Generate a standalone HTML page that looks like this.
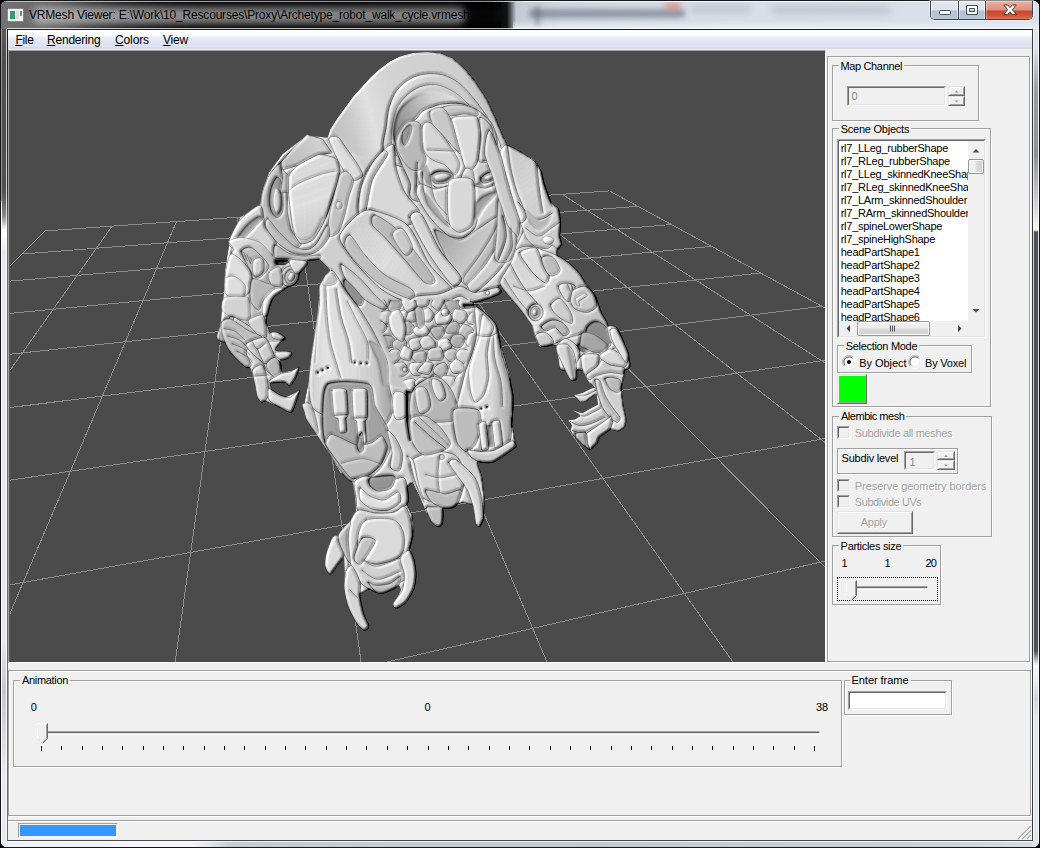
<!DOCTYPE html>
<html><head><meta charset='utf-8'><title>VRMesh Viewer</title>
<style>
html,body{margin:0;padding:0;background:#000;}
body{width:1040px;height:848px;overflow:hidden;font-family:"Liberation Sans",sans-serif;}
#win{position:relative;width:1040px;height:848px;overflow:hidden;}
#win div,#win span.t,#win svg{position:absolute;}
.t{white-space:pre;display:block;}
.dis{color:#a0a0a0;text-shadow:1px 1px 0 #fff;}
u{text-decoration:underline;text-underline-offset:1px;}

</style></head>
<body>
<div id='win'>
<div style='left:0;top:0;width:1040px;height:848px;border-radius:7px;background:#14161a;'></div>
<div id='glass' style='left:1px;top:1px;width:1038px;height:846px;border-radius:6px;background:#dfe5f0;box-shadow:inset 0 0 0 1px #f4f7fb;overflow:hidden;'><div style='left:0;top:839px;width:1038px;height:7px;background:linear-gradient(90deg,#eef2f8 0px,#f2f5fa 190px,#e2e7ee 208px,#c6cdd7 228px,#c3cad4 600px,#c9d0d9 900px,#d6dce5 1038px);'></div><div style='left:1031px;top:0;width:7px;height:846px;background:linear-gradient(180deg,#dfe5ee 0px,#dfe5ee 46px,#9a9da2 88px,#8e9196 155px,#ececec 222px,#f6f6f6 229px,#4e5358 231px,#4e5358 650px,#f4f6fa 664px,#e9edf4 680px,#cfd3da 698px,#e2e7f0 716px,#dfe5f0 846px);'></div><div style='left:1037px;top:6px;width:1px;height:834px;background:rgba(255,255,255,.82);'></div><div style='left:0;top:0;width:7px;height:846px;background:linear-gradient(180deg,#6e6e6e 0px,#585858 30px,#4e4e4e 60px,#505050 190px,#8a8a8a 215px,#ffffff 229px,#ffffff 233px,#e4e8f4 250px,#e4e8f4 640px,#c3c7cf 690px,#e4e8f4 770px,#e6eaf4 846px);'></div><div style='left:0;top:200px;width:1px;height:646px;background:#fff;'></div><div style='left:0;top:6px;width:1px;height:194px;background:rgba(255,255,255,.4);'></div><div style='left:5px;top:235px;width:1px;height:611px;background:#f4f8fc;'></div><div style='left:0;top:0;width:1038px;height:28px;background:linear-gradient(90deg,#727272 0px,#6a6a6a 40px,#3a3a3a 110px,#111 200px,#050505 492px,#101214 506px,#5c6066 510px,#c3cad4 515px,#cfd7e1 560px,#d6dde6 700px,#d9e0e8 1038px);'></div><div style='left:60px;top:0;width:440px;height:28px;background:linear-gradient(180deg,rgba(0,0,0,.9) 0,rgba(0,0,0,0) 9px,rgba(0,0,0,0) 19px,rgba(0,0,0,.9) 28px);-webkit-mask-image:linear-gradient(90deg,transparent 0,#000 120px);'></div><div style='left:36px;top:11px;width:424px;height:7px;border-radius:4px;background:rgba(255,255,255,.48);box-shadow:0 0 7px 5px rgba(255,255,255,.46);'></div><div style='left:512px;top:19px;width:526px;height:9px;background:linear-gradient(180deg,rgba(236,242,249,0),rgba(236,242,249,.85));'></div><div style='left:528px;top:8px;width:156px;height:9px;border-radius:4px;background:rgba(60,70,85,.42);filter:blur(2.5px);'></div><div style='left:534px;top:5px;width:5px;height:20px;border-radius:2px;background:rgba(60,70,85,.3);filter:blur(2px);'></div><div style='left:690px;top:4px;width:60px;height:8px;border-radius:4px;background:rgba(90,100,115,.16);filter:blur(3px);'></div><div style='left:770px;top:5px;width:120px;height:8px;border-radius:4px;background:rgba(90,100,115,.18);filter:blur(3px);'></div><div style='left:664px;top:1px;width:16px;height:8px;border-radius:4px;background:rgba(235,110,90,.6);filter:blur(3px);'></div><div style='left:5px;top:0;width:1028px;height:1px;background:linear-gradient(90deg,#c4c4c4 0,#a0a0a0 200px,#8a8a8a 480px,#f4f7fb 520px,#f8fafc 100%);'></div></div>
<div style='left:8px;top:9px;width:15px;height:12px;background:#f4f4f4;box-shadow:0 0 1px #fff;'><div style='left:2px;top:2px;width:5px;height:8px;background:linear-gradient(180deg,#4a7fb0,#2f9a78 50%,#35a04a);'></div><div style='left:8px;top:2px;width:3px;height:8px;background:#dcdcdc;'></div><div style='left:12px;top:2px;width:2px;height:5px;background:linear-gradient(180deg,#4a80c0,#5ab060);'></div></div>
<span class='t ' style='left:29px;top:9.14px;font-size:12px;line-height:13.79px;color:#000;letter-spacing:-0.183px;'>VRMesh Viewer: E:\Work\10_Rescourses\Proxy\Archetype_robot_walk_cycle.vrmesh</span>
<div style='left:930px;top:1px;width:103px;height:19px;border:1px solid #3b4452;border-top:none;border-radius:0 0 5px 5px;box-sizing:border-box;overflow:hidden;background:#c9d3df;box-shadow:0 0 1px 1px rgba(255,255,255,.55);'><div style='left:0;top:0;width:27px;height:19px;background:linear-gradient(180deg,#e3e9f0 0,#dbe2eb 9px,#b3c0d0 10px,#b9c6d5 19px);box-shadow:inset 0 0 0 1px rgba(255,255,255,.5);'></div><div style='left:27px;top:0;width:1px;height:19px;background:#3b4452;'></div><div style='left:28px;top:0;width:26px;height:19px;background:linear-gradient(180deg,#e3e9f0 0,#dbe2eb 9px,#b3c0d0 10px,#b9c6d5 19px);box-shadow:inset 0 0 0 1px rgba(255,255,255,.5);'></div><div style='left:54px;top:0;width:1px;height:19px;background:#3b4452;'></div><div style='left:55px;top:0;width:47px;height:19px;background:linear-gradient(180deg,#eeb0a2 0,#e08f7e 9px,#c9452c 10px,#d2573a 15px,#dc8066 19px);box-shadow:inset 0 0 0 1px rgba(255,255,255,.35);'></div></div>
<svg style='left:930px;top:0' width='103' height='20' viewBox='0 0 103 20'><rect x='9.5' y='10.5' width='11' height='4' rx='1' fill='#fff' stroke='#454f5e' stroke-width='1'/><path d='M36.5 5.5h11v9h-11z M39.5 8.5h5v3h-5z' fill='#fff' fill-rule='evenodd' stroke='#454f5e' stroke-width='1' stroke-linejoin='round'/><path d='M73.8 5 L77.8 5 L80 7.6 L82.2 5 L86.2 5 L82.3 9.7 L86.5 14.6 L82.3 14.6 L80 11.8 L77.7 14.6 L73.5 14.6 L77.7 9.7 Z' fill='#fff' stroke='#4e3434' stroke-width='1' stroke-linejoin='round'/></svg>
<div style='left:6px;top:28px;width:1028px;height:814px;box-sizing:border-box;border:1px solid rgba(255,255,255,.75);border-radius:1px;'></div>
<div style='left:7px;top:29px;width:1026px;height:812px;box-sizing:border-box;border:1px solid #45484c;border-top-color:#1c1c1c;border-left-color:#66696e;border-right-color:#36383b;'></div>
<div style='left:7px;top:29px;width:1px;height:200px;background:linear-gradient(180deg,#151515,#303030 160px,#6e7074);'></div>
<div id='client' style='left:8px;top:30px;width:1024px;height:810px;background:#f0f0f0;'></div>
<div style='left:8px;top:30px;width:1024px;height:19px;background:linear-gradient(180deg,#ffffff 0,#fbfcfe 5px,#e9ecf6 8px,#dfe4f2 13px,#dde2f0 17px,#cdd2e0 18px,#e6e8ee 19px);'></div>
<span class='t ' style='left:15.5px;top:33.94px;font-size:12px;line-height:13.79px;color:#000;letter-spacing:-0.336px;'><u>F</u>ile</span>
<span class='t ' style='left:47px;top:33.94px;font-size:12px;line-height:13.79px;color:#000;letter-spacing:-0.208px;'><u>R</u>endering</span>
<span class='t ' style='left:115px;top:33.94px;font-size:12px;line-height:13.79px;color:#000;letter-spacing:-0.115px;'><u>C</u>olors</span>
<span class='t ' style='left:163px;top:33.94px;font-size:12px;line-height:13.79px;color:#000;letter-spacing:-0.199px;'><u>V</u>iew</span>
<div style='left:8px;top:50px;width:818px;height:613px;box-sizing:border-box;border:1px solid;border-color:#a0a0a0 #fff #fff #a0a0a0;background:#4b4b4b;'></div>
<svg style='left:9px;top:51px' width='816' height='611' viewBox='9 51 816 611'>
<rect x='9' y='51' width='816' height='611' fill='#4b4b4b'/>
<g stroke='#8c8c8c' stroke-width='1' fill='none' shape-rendering='crispEdges'>
<line x1='45.0' y1='230.9' x2='609.5' y2='190.9'/>
<line x1='22.0' y1='254.0' x2='637.9' y2='206.3'/>
<line x1='-6.2' y1='282.5' x2='671.4' y2='224.5'/>
<line x1='-41.7' y1='318.3' x2='711.6' y2='246.4'/>
<line x1='-87.7' y1='364.8' x2='760.7' y2='273.0'/>
<line x1='-149.9' y1='427.5' x2='822.0' y2='306.3'/>
<line x1='-238.3' y1='516.7' x2='900.8' y2='349.1'/>
<line x1='-374.2' y1='653.8' x2='1005.7' y2='406.1'/>
<line x1='-609.6' y1='891.4' x2='1152.3' y2='485.7'/>
<line x1='-1117.5' y1='1403.9' x2='1371.7' y2='604.8'/>
<line x1='-3020.1' y1='3323.6' x2='1735.9' y2='802.6'/>
<line x1='45.0' y1='230.9' x2='-3020.1' y2='3323.6'/>
<line x1='112.1' y1='226.1' x2='-1516.7' y2='2526.7'/>
<line x1='176.5' y1='221.6' x2='-595.5' y2='2038.4'/>
<line x1='238.2' y1='217.2' x2='26.8' y2='1708.5'/>
<line x1='297.6' y1='213.0' x2='475.4' y2='1470.7'/>
<line x1='354.6' y1='209.0' x2='814.2' y2='1291.2'/>
<line x1='409.5' y1='205.1' x2='1079.0' y2='1150.8'/>
<line x1='462.3' y1='201.3' x2='1291.7' y2='1038.0'/>
<line x1='513.1' y1='197.7' x2='1466.3' y2='945.5'/>
<line x1='562.2' y1='194.3' x2='1612.2' y2='868.2'/>
<line x1='609.5' y1='190.9' x2='1735.9' y2='802.6'/>
</g>
<defs><filter id='emb' x='200' y='45' width='460' height='600' filterUnits='userSpaceOnUse' color-interpolation-filters='sRGB'><feColorMatrix in='SourceGraphic' type='luminanceToAlpha' result='lum'/><feGaussianBlur in='lum' stdDeviation='0.9' result='b'/><feDiffuseLighting in='b' surfaceScale='5' diffuseConstant='1' lighting-color='#ffffff' result='lit'><feDistantLight azimuth='215' elevation='50'/></feDiffuseLighting><feComposite in='lit' in2='SourceGraphic' operator='arithmetic' k1='0' k2='0.75' k3='1' k4='-0.55' result='sh'/><feComposite in='sh' in2='SourceAlpha' operator='in'/></filter></defs><g id='robot' filter='url(#emb)'>
<defs><linearGradient id='gA' x1='0' y1='0' x2='1' y2='0'><stop offset='0' stop-color='#a9a9a9'/><stop offset='.25' stop-color='#cfcfcf'/><stop offset='.6' stop-color='#d8d8d8'/><stop offset='1' stop-color='#b4b4b4'/></linearGradient></defs>
<path d='M330 130 L337 119 L345 108 L353 97 L362 87 L371 77 L380 69 L390 61.5 L400 56.5 L413 53 L427 52 L441 53.5 L453 58.5 L465 69 L477 84 L488 101 L497 121 L504 138 L508.5 146 L522 152.5 L535 160 L540 170 L545 185 L551 202 L557.5 207.5 L561 220 L560 235 L562.5 245 L557.5 250 L557.5 260 L575 272.5 L585 282.5 L592.5 292.5 L600 312.5 L605 326 L617.5 330 L628.75 353.75 L626 365 L623.75 380 L621.7 388.5 L623.9 406.5 L627 420.3 L625 427.8 L618.5 432 L613.2 430 L610 430 L599.4 437.3 L597.3 443.7 L590 450.6 L582.5 444.8 L575 437.3 L570.3 431 L572 425.5 L568.1 420.3 L575 419.3 L580.3 416 L572.4 410.3 L582.5 413 L592 407.5 L597.9 404.4 L596.3 393.8 L585.6 402.3 L580.3 402.3 L574 394.9 L582.5 392.7 L591 388.5 L595.2 387.4 L588.75 382.5 L582.5 371.25 L580 355 L577.5 356 L576.9 378.75 L571.25 380.6 L566.25 372.5 L561.25 361.25 L556.9 352.5 L556.9 345 L540 347.5 L534 335 L532 326 L520 309 L504.6 290.8 L500 285 L489 297 L472.5 300 L475 307.5 L497.5 327.5 L502.5 350 L510 375 L514 400 L512.5 425 L516 445 L492.5 461 L477.5 462.5 L482.5 477.5 L485 500 L484 520 L480 527.5 L476 522.5 L472.5 505 L462.5 502.5 L450 507.5 L440 510 L442.5 525 L435 525 L426 512.5 L420 497.5 L412.5 482.5 L407.5 487.5 L407.5 505 L412.5 515 L414 535 L410 550 L415 565 L415 582.5 L407.5 600 L397.5 609 L394 604 L401 590 L397.5 582.5 L382.5 592.5 L372.5 587.5 L359 595 L362.5 612.5 L369 626 L364 630 L356 620 L349 605 L345 587.5 L344 557.5 L337.5 565 L331 575 L327.5 570 L326 557.5 L332.5 537.5 L340 537.5 L347.5 525 L356 512.5 L355 497.5 L352.5 482.5 L340 472.5 L330 455 L320 440 L310 425 L304 410 L305 400 L309 380 L312.5 350 L317.5 312.5 L320 285 L330 270 L320 260 L310 257.5 L307.5 262.5 L297.5 277.5 L287.5 287.5 L275 287.5 L272.5 300 L266 320 L270 332.5 L285 337.5 L275 350 L291 354 L280 360 L282.5 372.5 L299 369 L287.5 382.5 L270 382.5 L272.5 392.5 L285 397.5 L299 391 L292.5 412.5 L285 410 L262.5 400 L257.5 390 L250 367.5 L237.5 355 L225 340 L221 322.5 L224 295 L225 270 L229 245 L240 217.5 L260 205 L262.5 190 L269 172.5 L282.5 154 L307.5 135 L327.5 137.5 Z' fill='#c9c9c9' />
<defs><linearGradient id='hoodO' gradientUnits='userSpaceOnUse' x1='330' y1='150' x2='510' y2='100'><stop offset='0' stop-color='#b6b6b6'/><stop offset='0.15' stop-color='#c2c2c2'/><stop offset='0.27' stop-color='#d9d9d9'/><stop offset='0.4' stop-color='#cecece'/><stop offset='0.8' stop-color='#c8c8c8'/><stop offset='1' stop-color='#a6a6a6'/></linearGradient><linearGradient id='hoodCav' gradientUnits='userSpaceOnUse' x1='395' y1='135' x2='470' y2='95'><stop offset='0' stop-color='#7c7c7c'/><stop offset='0.25' stop-color='#9a9a9a'/><stop offset='0.6' stop-color='#c8c8c8'/><stop offset='1' stop-color='#dedede'/></linearGradient><linearGradient id='ring1' gradientUnits='userSpaceOnUse' x1='385' y1='140' x2='480' y2='100'><stop offset='0' stop-color='#bcbcbc'/><stop offset='0.4' stop-color='#d4d4d4'/><stop offset='1' stop-color='#c2c2c2'/></linearGradient></defs>
<path d='M330 130 L337 119 L345 108 L353 97 L362 87 L371 77 L380 69 L390 61.5 L400 56.5 L413 53 L427 52 L441 53.5 L453 58.5 L465 69 L477 84 L488 101 L497 121 L504 138 L508.5 146 L512 160 L500 175 L383 165 L345 150 Z' fill='url(#hoodO)' />
<path d='M383.5 150 C381.7 143.6 385.4 134.0 386.3 126.9 C387.2 119.9 387.4 113.8 389.2 107.7 C391.0 101.6 393.4 95.2 396.9 90.4 C400.4 85.6 405.6 81.5 410.4 78.8 C415.2 76.1 420.4 74.6 425.8 74 C431.2 73.4 437.7 73.5 443.1 75 C448.6 76.5 453.7 79.2 458.5 82.7 C463.3 86.2 467.7 91.4 471.9 96.2 C476.1 101.0 480.0 106.4 483.5 111.5 C487.0 116.6 490.2 121.1 493.1 126.9 C496.0 132.7 498.9 139.8 500.8 146.2 C502.7 152.6 512.3 160.9 504.6 165.4 C496.9 169.9 472.6 173.1 454.6 173.1 C436.7 173.1 408.8 169.2 396.9 165.4 C385.0 161.6 385.3 156.4 383.5 150 Z' fill='url(#ring1)' stroke='#6a6a6a' stroke-width='1' stroke-linejoin='round' stroke-linecap='round' />
<path d='M391.5 142.3 C390.4 135.6 392.4 124.0 394 117.3 C395.6 110.6 397.1 106.7 400.8 101.9 C404.5 97.1 410.4 91.4 416.2 88.5 C422.0 85.6 429.0 84.0 435.4 84.6 C441.8 85.2 448.8 88.8 454.6 92.3 C460.4 95.8 465.5 101.3 470 105.8 C474.5 110.3 478.0 114.1 481.5 119.2 C485.0 124.3 488.6 130.1 491.2 136.5 C493.8 142.9 503.0 152.9 496.9 157.7 C490.8 162.5 470.6 165.4 454.6 165.4 C438.6 165.4 411.3 161.5 400.8 157.7 C390.3 153.8 392.6 149.0 391.5 142.3 Z' fill='#c4c4c4' stroke='#7a7a7a' stroke-width='0.8' stroke-linejoin='round' stroke-linecap='round' />
<path d='M394 140.4 C392.1 135.3 393.9 125.0 395.4 119.2 C396.8 113.4 398.9 109.8 402.7 105.8 C406.5 101.8 412.7 97.6 418.1 95.2 C423.6 92.8 429.6 91.1 435.4 91.3 C441.2 91.5 447.2 93.5 452.7 96.2 C458.1 98.9 463.6 103.5 468.1 107.7 C472.6 111.9 476.4 116.4 479.6 121.2 C482.8 126.0 491.5 130.4 487.3 136.5 C483.1 142.6 468.1 155.4 454.6 157.7 C441.1 159.9 416.6 152.9 406.5 150 C396.4 147.1 395.9 145.5 394 140.4 Z' fill='url(#hoodCav)' />
<defs><linearGradient id='headG' gradientUnits='userSpaceOnUse' x1='398' y1='140' x2='498' y2='130'><stop offset='0' stop-color='#b0b0b0'/><stop offset='0.3' stop-color='#cecece'/><stop offset='0.6' stop-color='#d8d8d8'/><stop offset='1' stop-color='#b8b8b8'/></linearGradient></defs>
<path d='M415 120 C418.1 117.7 419.6 113.4 422.5 111.2 C425.4 109.0 429.2 108.1 432.5 106.9 C435.8 105.7 437.9 104.6 442.5 104 C447.1 103.4 454.6 102.7 460 103.5 C465.4 104.3 470.8 106.7 475 108.8 C479.2 110.9 482.1 113.5 485 116.2 C487.9 118.9 490.5 121.2 492.5 125 C494.5 128.8 496.0 133.8 496.9 138.8 C497.8 143.8 498.0 149.8 498.1 155 C498.2 160.2 498.2 165.4 497.5 170 C496.8 174.6 495.5 178.3 493.8 182.5 C492.1 186.7 489.8 191.9 487.5 195 C485.2 198.1 491.9 200.0 480 201 C468.1 202.0 427.9 204.1 416.2 201 C404.5 197.9 412.7 189.3 410 182.5 C407.3 175.7 402.4 166.7 400 160 C397.6 153.3 395.0 148.3 395.6 142.5 C396.2 136.7 400.6 128.8 403.8 125 C407.0 121.2 411.9 122.3 415 120 Z' fill='url(#headG)' stroke='#5a5a5a' stroke-width='1' stroke-linejoin='round' stroke-linecap='round' />
<path d='M405 124.4 C407.9 120.9 411.1 120.9 413.8 121.2 C416.5 121.5 419.8 121.8 421.2 126.2 C422.6 130.6 421.7 141.9 422.5 147.5 C423.3 153.1 426.4 156.4 426.2 160 C426.0 163.6 423.5 167.1 421.2 168.8 C418.9 170.5 415.6 171.5 412.5 170 C409.4 168.5 405.2 164.6 402.5 160 C399.8 155.4 395.8 148.4 396.2 142.5 C396.6 136.6 402.1 128.0 405 124.4 Z' fill='#b2b2b2' stroke='#6a6a6a' stroke-width='0.8' stroke-linejoin='round' stroke-linecap='round' />
<path d='M402.5 132.5 C403.6 129.6 407.2 125.8 408.8 125 C410.4 124.2 411.7 125.6 411.9 127.5 C412.1 129.4 411.1 133.3 410 136.2 C408.9 139.1 406.9 143.9 405.6 145 C404.4 146.1 403.0 144.6 402.5 142.5 C402.0 140.4 401.4 135.4 402.5 132.5 Z' fill='#8e8e8e' stroke='#555' stroke-width='0.6' stroke-linejoin='round' stroke-linecap='round' />
<path d='M451.9 118.1 C453.1 116.2 462.1 116.3 465 116.2 C467.9 116.1 475.1 115.0 476.9 116.9 C478.7 118.8 480.5 127.5 480.6 132.5 C480.7 137.5 479.2 155.6 478.1 160 C477.0 164.4 472.7 169.7 471.2 170.6 C469.7 171.5 466.3 169.8 465 167.5 C463.7 165.2 461.2 155.3 460 151.2 C458.8 147.1 455.9 136.4 455 132.5 C454.1 128.6 450.7 120.0 451.9 118.1 Z' fill='#d5d5d5' stroke='#707070' stroke-width='0.9' stroke-linejoin='round' stroke-linecap='round' />
<path d='M442.5 107.5 C444.0 105.7 454.6 104.7 460 105 C465.4 105.3 472.1 107.6 475 109.4 C477.9 111.2 479.2 114.9 477.5 115.6 C475.8 116.3 469.4 113.8 465 113.8 C460.6 113.8 454.9 116.6 451.2 115.6 C447.4 114.5 441.0 109.3 442.5 107.5 Z' fill='#bdbdbd' stroke='#6a6a6a' stroke-width='0.8' stroke-linejoin='round' stroke-linecap='round' />
<path d='M422.5 126.2 C423.3 122.5 427.3 121.3 430 122.5 C432.7 123.7 439.2 130.8 442.5 135 C445.8 139.2 452.7 149.8 455 153.8 C457.3 157.8 460.0 162.2 460 165 C460.0 167.8 457.0 175.0 455 175 C453.0 175.0 448.0 167.0 445 165 C442.0 163.0 435.3 162.0 432.5 160 C429.7 158.0 425.1 154.5 423.8 150 C422.5 145.5 421.7 129.9 422.5 126.2 Z' fill='#cfcfcf' stroke='#686868' stroke-width='0.8' stroke-linejoin='round' stroke-linecap='round' />
<path d='M430 111.2 C431.3 109.0 439.7 106.3 442.5 107.5 C445.3 108.7 449.2 115.3 451.2 120 C453.2 124.7 456.3 138.0 457.5 142.5 C458.7 147.0 461.8 154.6 460 153.8 C458.2 153.0 447.5 140.2 443.8 136.2 C440.1 132.2 434.3 127.1 432.5 123.8 C430.7 120.5 428.7 113.4 430 111.2 Z' fill='#c2c2c2' stroke='#6c6c6c' stroke-width='0.8' stroke-linejoin='round' stroke-linecap='round' />
<path d='M480 117.5 C481.3 115.8 489.2 122.5 491.2 126.2 C493.2 129.9 494.5 140.5 495 145 C495.5 149.5 496.3 157.7 495 160 C493.7 162.3 487.2 162.5 485 162.5 C482.8 162.5 479.3 163.2 478.8 160 C478.3 156.8 481.0 144.5 481.2 138.8 C481.4 133.1 478.7 119.2 480 117.5 Z' fill='#c0c0c0' stroke='#6a6a6a' stroke-width='0.8' stroke-linejoin='round' stroke-linecap='round' />
<path d='M431.2 175 C432.2 173.3 435.7 171.6 438.8 171.2 C441.9 170.8 447.5 171.4 450 172.5 C452.5 173.6 454.2 175.8 453.8 177.5 C453.4 179.2 450.2 181.4 447.5 182.5 C444.8 183.6 440.0 184.0 437.5 183.8 C435.0 183.6 433.6 182.7 432.5 181.2 C431.4 179.7 430.1 176.7 431.2 175 Z' fill='#909090' stroke='#505050' stroke-width='0.8' stroke-linejoin='round' stroke-linecap='round' />
<path d='M435 176.2 C436.1 175.1 441.3 173.8 443.8 173.8 C446.3 173.8 450.0 175.2 450 176.2 C450.0 177.2 445.9 179.3 443.8 180 C441.7 180.7 439.0 181.2 437.5 180.6 C436.0 180.0 433.9 177.3 435 176.2 Z' fill='#cacaca' />
<path d='M481.2 177.5 C482.4 175.8 486.3 173.2 488.8 172.5 C491.3 171.8 495.2 172.0 496.2 173.1 C497.2 174.2 496.4 177.2 495 178.8 C493.6 180.4 489.7 181.9 487.5 182.5 C485.3 183.1 482.9 183.3 481.9 182.5 C480.8 181.7 480.0 179.2 481.2 177.5 Z' fill='#8c8c8c' stroke='#505050' stroke-width='0.8' stroke-linejoin='round' stroke-linecap='round' />
<path d='M485 177.5 C485.4 176.6 489.7 174.6 491.2 174.4 C492.7 174.2 494.2 175.3 493.8 176.2 C493.4 177.1 490.3 179.8 488.8 180 C487.3 180.2 484.6 178.4 485 177.5 Z' fill='#c4c4c4' />
<path d='M465 168.8 C466.7 167.2 471.2 168.8 472.5 170.6 C473.8 172.4 474.5 178.4 475 182.5 C475.5 186.6 478.0 198.5 476.2 201 C474.4 203.5 463.4 203.5 461.2 201 C459.0 198.5 459.5 186.8 460 182.5 C460.5 178.2 463.3 170.4 465 168.8 Z' fill='#cdcdcd' stroke='#707070' stroke-width='0.8' stroke-linejoin='round' stroke-linecap='round' />
<path d='M422.5 170 C424.2 172.5 428.8 181.7 432.5 185 C436.2 188.3 441.2 190.4 445 190 C448.8 189.6 452.5 183.3 455 182.5 C457.5 181.7 459.2 184.6 460 185' fill='none' stroke='#5e5e5e' stroke-width='1' stroke-linejoin='round' stroke-linecap='round' />
<path d='M416.2 172.5 C417.2 175.4 419.8 185.2 422.5 190 C425.2 194.8 430.8 199.2 432.5 201' fill='none' stroke='#666' stroke-width='1' stroke-linejoin='round' stroke-linecap='round' />
<path d='M477.5 185 C478.8 185.8 482.1 190.0 485 190 C487.9 190.0 493.3 185.8 495 185' fill='none' stroke='#5e5e5e' stroke-width='1' stroke-linejoin='round' stroke-linecap='round' />
<path d='M427.5 150 C429.6 150.1 434.6 150.4 440 150.6 C445.4 150.8 456.7 151.1 460 151.2' fill='none' stroke='#777' stroke-width='0.8' stroke-linejoin='round' stroke-linecap='round' />
<path d='M482.5 161.2 C484.2 161.0 490.0 159.4 492.5 160 C495.0 160.6 496.7 164.2 497.5 165' fill='none' stroke='#666' stroke-width='0.8' stroke-linejoin='round' stroke-linecap='round' />
<path d='M421.2 168.8 C421.2 165.9 424.5 164.0 426.2 165 C427.9 166.0 430.1 171.7 431.2 175 C432.2 178.3 433.3 183.8 432.5 185 C431.7 186.2 428.1 185.2 426.2 182.5 C424.3 179.8 421.2 171.7 421.2 168.8 Z' fill='#a4a4a4' />
<path d='M475 185 C475.8 182.9 479.5 181.7 481.2 182.5 C482.9 183.3 485.2 187.5 485 190 C484.8 192.5 481.5 196.7 480 197.5 C478.5 198.3 477.0 197.1 476.2 195 C475.4 192.9 474.2 187.1 475 185 Z' fill='#a0a0a0' />
<defs><linearGradient id='chestL' gradientUnits='userSpaceOnUse' x1='330' y1='200' x2='470' y2='290'><stop offset='0' stop-color='#bebebe'/><stop offset='0.5' stop-color='#d6d6d6'/><stop offset='1' stop-color='#c4c4c4'/></linearGradient><linearGradient id='neckG' gradientUnits='userSpaceOnUse' x1='440' y1='230' x2='520' y2='280'><stop offset='0' stop-color='#9a9a9a'/><stop offset='0.5' stop-color='#c2c2c2'/><stop offset='1' stop-color='#d4d4d4'/></linearGradient></defs>
<path d='M382.5 151.2 C386.2 147.5 392.0 142.8 393.8 145 C395.6 147.2 394.7 161.2 396.2 167.5 C397.7 173.8 401.8 186.5 405 192.5 C408.2 198.5 419.7 208.2 420 212.5 C420.3 216.8 413.8 225.3 407.5 225 C401.2 224.7 379.0 211.7 372.5 210 C366.0 208.3 360.5 214.8 358.8 212.5 C357.1 210.2 359.0 197.8 360 192.5 C361.0 187.2 363.2 178.0 366.2 172.5 C369.2 167.0 378.8 154.9 382.5 151.2 Z' fill='#d2d2d2' stroke='#666' stroke-width='0.9' stroke-linejoin='round' stroke-linecap='round' />
<path d='M382.5 151.2 C384.7 149.9 388.8 151.2 387.5 155 C386.2 158.8 375.4 172.3 372.5 180 C369.6 187.7 367.3 208.2 365.5 212.5 C363.7 216.8 359.4 215.8 358.8 212.5 C358.2 209.2 359.5 193.8 361.2 187.5 C362.9 181.2 368.4 169.8 371.2 165 C374.0 160.2 380.3 152.5 382.5 151.2 Z' fill='#c6c6c6' stroke='#5c5c5c' stroke-width='0.9' stroke-linejoin='round' stroke-linecap='round' />
<path d='M435 230 C437.0 228.0 454.0 240.3 460 240 C466.0 239.7 473.7 231.2 480 227.5 C486.3 223.8 502.5 211.2 507.5 212.5 C512.5 213.8 518.5 230.5 517.5 237.5 C516.5 244.5 506.0 258.7 500 265 C494.0 271.3 477.8 283.0 472.5 285 C467.2 287.0 463.7 284.0 460 280 C456.3 276.0 448.3 261.7 445 255 C441.7 248.3 433.0 232.0 435 230 Z' fill='url(#neckG)' stroke='#707070' stroke-width='0.8' stroke-linejoin='round' stroke-linecap='round' />
<path d='M358.8 213.8 C362.6 211.4 366.0 209.0 372.5 210.5 C379.0 212.0 399.8 217.7 407.5 225 C415.2 232.3 424.0 256.3 430 265 C436.0 273.7 451.2 285.8 452.5 290 C453.8 294.2 445.7 294.5 440 296.2 C434.3 297.9 417.7 303.3 410 302.5 C402.3 301.7 389.5 295.0 382.5 290 C375.5 285.0 363.2 271.7 357.5 265 C351.8 258.3 341.8 244.8 340 240 C338.2 235.2 341.3 232.3 343.8 228.8 C346.3 225.3 355.0 216.2 358.8 213.8 Z' fill='url(#chestL)' stroke='#5c5c5c' stroke-width='0.9' stroke-linejoin='round' stroke-linecap='round' />
<path d='M375 215 C378.8 215.8 391.1 224.0 397.5 230 C403.9 236.0 411.9 247.5 417.5 255 C423.1 262.5 433.9 275.9 435 280 C436.1 284.1 429.5 285.5 425 282.5 C420.5 279.5 411.0 266.8 405 260 C399.0 253.2 389.9 242.8 385 237.5 C380.1 232.2 374.0 228.4 372.5 225 C371.0 221.6 371.2 214.2 375 215 Z' fill='#b4b4b4' stroke='#6a6a6a' stroke-width='0.8' stroke-linejoin='round' stroke-linecap='round' />
<path d='M350 235 C353.0 236.3 359.8 249.0 365 255 C370.2 261.0 377.9 269.8 385 275 C392.1 280.2 408.8 286.4 412.5 290 C416.2 293.6 414.5 299.4 410 298.8 C405.5 298.2 390.0 291.1 382.5 286.2 C375.0 281.3 365.6 272.2 360 266.2 C354.4 260.2 346.5 250.9 345 246.2 C343.5 241.5 347.0 233.7 350 235 Z' fill='#bababa' stroke='#6a6a6a' stroke-width='0.8' stroke-linejoin='round' stroke-linecap='round' />
<path d='M410 217.5 C409.5 213.0 417.2 209.5 421.2 213.8 C425.2 218.1 434.7 241.5 440 250 C445.3 258.5 459.4 272.7 461.2 277.5 C463.0 282.3 456.6 287.2 453.8 286.2 C451.0 285.2 443.8 275.2 440 270 C436.2 264.8 429.0 254.5 425 247.5 C421.0 240.5 410.5 222.0 410 217.5 Z' fill='#d0d0d0' stroke='#5a5a5a' stroke-width='0.9' stroke-linejoin='round' stroke-linecap='round' />
<path d='M392.5 235 C392.1 230.6 399.2 226.7 402.5 228.8 C405.8 230.9 412.1 243.1 412.5 247.5 C412.9 251.9 408.3 257.1 405 255 C401.7 252.9 392.9 239.4 392.5 235 Z' fill='#c4c4c4' stroke='#666' stroke-width='0.8' stroke-linejoin='round' stroke-linecap='round' />
<path d='M520 210 C521.8 212.7 525.7 220.0 525 225 C524.3 230.0 518.7 241.2 515 247.5 C511.3 253.8 502.8 266.5 497.5 272.5 C492.2 278.5 479.0 291.0 475 292.5 C471.0 294.0 466.2 287.5 467.5 283.8 C468.8 280.1 480.3 271.5 485 265 C489.7 258.5 499.0 243.0 502.5 235 C506.0 227.0 508.9 208.3 511.2 205 C513.5 201.7 518.2 207.3 520 210 Z' fill='#c8c8c8' stroke='#5c5c5c' stroke-width='0.9' stroke-linejoin='round' stroke-linecap='round' />
<path d='M511.2 205 C511.0 209.0 506.0 227.0 502.5 235 C499.0 243.0 489.7 258.5 485 265 C480.3 271.5 470.3 282.1 467.5 283.8 C464.7 285.5 462.1 281.3 463.8 277.5 C465.5 273.7 475.8 261.3 480 255 C484.2 248.7 491.8 236.7 495 230 C498.2 223.3 501.6 208.3 503.8 205 C506.0 201.7 511.4 201.0 511.2 205 Z' fill='#b6b6b6' stroke='#707070' stroke-width='0.7' stroke-linejoin='round' stroke-linecap='round' />
<path d='M407.5 302.5 C407.5 300.8 413.2 297.4 417.5 296.2 C421.8 295.0 434.3 295.1 440 293.8 C445.7 292.5 455.3 286.4 460 286.2 C464.7 286.0 470.0 292.3 475 292.5 C480.0 292.7 494.2 287.3 497.5 287.5 C500.8 287.7 503.0 291.8 500 293.8 C497.0 295.8 480.3 302.2 475 302.5 C469.7 302.8 464.7 295.9 460 296.2 C455.3 296.5 445.7 303.3 440 305 C434.3 306.7 421.8 309.1 417.5 308.8 C413.2 308.5 407.5 304.2 407.5 302.5 Z' fill='#c2c2c2' stroke='#555' stroke-width='0.9' stroke-linejoin='round' stroke-linecap='round' />
<circle cx='420.5' cy='302.5' r='2.2' fill='#d8d8d8' stroke='#555' stroke-width='.8'/>
<circle cx='487.5' cy='293' r='2.2' fill='#d8d8d8' stroke='#555' stroke-width='.8'/>
<path d='M419.5 183.8 C421.9 182.9 430.9 188.6 435 188.8 C439.1 189.0 445.0 185.9 450 185.5 C455.0 185.1 467.8 185.2 472.5 185.5 C477.2 185.8 481.2 188.3 485 188 C488.8 187.7 499.2 182.8 501.2 183 C503.2 183.2 502.7 186.6 500 189.5 C497.3 192.4 484.5 199.9 481.2 205 C477.9 210.1 477.5 223.1 475 227.5 C472.5 231.9 466.2 237.0 462.5 238 C458.8 239.0 451.8 237.7 447.5 235 C443.2 232.3 434.1 222.8 430 217.5 C425.9 212.2 418.4 200.0 417 195.5 C415.6 191.0 417.1 184.7 419.5 183.8 Z' fill='#cacaca' stroke='#585858' stroke-width='0.9' stroke-linejoin='round' stroke-linecap='round' />
<path d='M417.5 162.5 L416.2 192.5' fill='none' stroke='#585858' stroke-width='0.9' stroke-linejoin='round' stroke-linecap='round' />
<path d='M506.2 162.5 L500 188.8' fill='none' stroke='#585858' stroke-width='0.9' stroke-linejoin='round' stroke-linecap='round' />
<path d='M450 180 C453.3 176.7 469.2 176.7 472.5 180 C475.8 183.3 475.0 199.0 475 205 C475.0 211.0 474.5 221.3 472.5 225 C470.5 228.7 463.0 232.5 460 232.5 C457.0 232.5 451.7 228.7 450 225 C448.3 221.3 447.5 211.0 447.5 205 C447.5 199.0 446.7 183.3 450 180 Z' fill='#d2d2d2' stroke='#666' stroke-width='0.8' stroke-linejoin='round' stroke-linecap='round' />
<path d='M422.5 172.5 C422.9 176.2 422.1 187.9 425 195 C427.9 202.1 435.8 210.0 440 215 C444.2 220.0 448.3 223.3 450 225' fill='none' stroke='#606060' stroke-width='0.9' stroke-linejoin='round' stroke-linecap='round' />
<path d='M430 175 C430.8 179.2 432.1 193.3 435 200 C437.9 206.7 445.4 212.5 447.5 215' fill='none' stroke='#707070' stroke-width='0.8' stroke-linejoin='round' stroke-linecap='round' />
<path d='M480 202.5 C481.7 201.2 486.7 197.1 490 195 C493.3 192.9 498.3 190.8 500 190' fill='none' stroke='#606060' stroke-width='0.9' stroke-linejoin='round' stroke-linecap='round' />
<path d='M425 192.5 C426.2 192.5 430.8 199.2 435 205 C439.2 210.8 449.2 225.0 450 227.5 C450.8 230.0 443.8 223.8 440 220 C436.2 216.2 430.0 209.6 427.5 205 C425.0 200.4 423.8 192.5 425 192.5 Z' fill='#a2a2a2' />
<path d='M475 205 C476.5 200.8 481.2 197.1 485 195 C488.8 192.9 497.5 190.4 497.5 192.5 C497.5 194.6 488.6 202.9 485 207.5 C481.4 212.1 477.9 220.4 476.2 220 C474.5 219.6 473.5 209.2 475 205 Z' fill='#9c9c9c' />
<defs><linearGradient id='padF' gradientUnits='userSpaceOnUse' x1='300' y1='160' x2='330' y2='245'><stop offset='0' stop-color='#d2d2d2'/><stop offset='0.5' stop-color='#d8d8d8'/><stop offset='1' stop-color='#c0c0c0'/></linearGradient><linearGradient id='padT' gradientUnits='userSpaceOnUse' x1='285' y1='160' x2='330' y2='145'><stop offset='0' stop-color='#b4b4b4'/><stop offset='1' stop-color='#cdcdcd'/></linearGradient></defs>
<path d='M328.8 138.8 C329.0 136.1 335.6 135.9 338.1 137.3 C340.6 138.7 344.6 145.9 347.3 149.6 C350.0 153.3 356.0 161.5 358.1 165 C360.2 168.5 363.3 173.7 362.7 175.8 C362.1 177.9 356.0 181.0 353.5 180.4 C351.0 179.8 346.5 174.3 344.2 171.2 C341.9 168.1 338.6 161.6 336.5 157.3 C334.4 153.0 328.6 141.5 328.8 138.8 Z' fill='#d6d6d6' stroke='#666' stroke-width='0.8' stroke-linejoin='round' stroke-linecap='round' />
<path d='M338.1 177.3 C339.7 173.8 343.7 170.8 345.8 171.2 C347.9 171.6 353.1 176.9 353.5 180.4 C353.9 183.9 350.0 192.4 348.8 197.3 C347.6 202.2 345.6 212.6 344.2 217.3 C342.8 222.0 340.2 230.2 338.1 232.7 C336.0 235.2 330.0 237.9 328.8 235.8 C327.6 233.7 328.2 222.4 328.8 217.3 C329.4 212.2 332.3 202.6 333.5 197.3 C334.7 192.0 336.5 180.8 338.1 177.3 Z' fill='#bcbcbc' stroke='#666' stroke-width='0.8' stroke-linejoin='round' stroke-linecap='round' />
<ellipse cx='339' cy='205.3' rx='3.2' ry='4' fill='#c8c8c8' stroke='#777' stroke-width='.7'/>
<path d='M279.6 163.5 C277.7 163.5 271.2 171.7 268.8 175.8 C266.4 179.9 262.9 189.5 261.9 194.2 C260.9 198.9 260.4 207.1 261.2 211.2 C262.0 215.3 265.4 221.3 268.1 225 C270.8 228.7 277.6 235.7 281.2 238.8 C284.8 241.9 292.3 247.5 295 248.1 C297.7 248.7 301.6 245.8 301.2 243.5 C300.8 241.2 293.8 235.5 291.9 231.2 C290.0 226.9 287.9 216.3 287.3 211.2 C286.7 206.1 287.9 197.4 287.3 192.7 C286.7 188.0 283.7 179.7 282.7 175.8 C281.7 171.9 281.5 163.5 279.6 163.5 Z' fill='#b4b4b4' stroke='#5c5c5c' stroke-width='0.9' stroke-linejoin='round' stroke-linecap='round' />
<path d='M276.5 177.3 C274.7 178.9 271.4 186.1 270.4 191.2 C269.4 196.3 269.4 203.8 270.4 208.1 C271.4 212.4 274.4 216.8 276.5 217.3 C278.6 217.8 281.7 215.3 282.7 211.2 C283.7 207.1 282.9 197.6 282.7 192.7 C282.4 187.8 282.2 184.5 281.2 181.9 C280.2 179.3 278.3 175.8 276.5 177.3 Z' fill='#8e8e8e' stroke='#555' stroke-width='0.8' stroke-linejoin='round' stroke-linecap='round' />
<path d='M275.8 189.6 C274.7 190.9 273.4 198.1 273.5 201.9 C273.6 205.8 275.4 211.7 276.5 212.7 C277.6 213.7 279.8 211.2 280.4 208.1 C281.0 205.0 281.2 197.3 280.4 194.2 C279.6 191.1 276.9 188.3 275.8 189.6 Z' fill='#c6c6c6' />
<path d='M307.3 134.2 L322.7 139.2 L332.2 153 L319.6 154.5 L298.1 165.3 L282.7 169.9 L280.8 162.2 L291.9 149.6 Z' fill='url(#padT)' stroke='#5e5e5e' stroke-width='0.9' stroke-linejoin='round' />
<path d='M288.8 175.8 C289.8 173.1 295.0 167.4 298.1 165.3 C301.2 163.2 315.8 155.1 319.6 154.5 C323.4 153.9 334.5 157.5 336.5 159.2 C338.5 160.9 340.0 168.2 339.9 171.2 C339.8 174.2 336.7 185.0 335.3 189.6 C333.9 194.2 328.2 212.3 326.1 217.3 C324.0 222.3 316.3 236.5 313.8 239.2 C311.3 241.8 303.2 244.5 301.2 243.8 C299.2 243.2 294.9 236.0 293.8 232.7 C292.7 229.4 290.9 215.2 290.4 211.2 C289.9 207.2 288.7 196.2 288.5 192.7 C288.3 189.2 287.8 178.5 288.8 175.8 Z' fill='url(#padF)' stroke='#5a5a5a' stroke-width='0.9' stroke-linejoin='round' stroke-linecap='round' />
<path d='M289.8 189.6 C291.7 188.4 295.7 184.8 301.2 182.2 C306.7 179.6 316.8 175.7 322.7 173.9 C328.6 172.1 334.2 171.6 336.5 171.2' fill='none' stroke='#8a8a8a' stroke-width='0.8' stroke-linejoin='round' stroke-linecap='round' />
<path d='M293.5 231.2 C294.8 232.6 298.0 238.8 301.2 239.6 C304.4 240.4 309.2 239.5 312.8 235.8 C316.4 232.1 321.1 220.4 322.7 217.3' fill='none' stroke='#8a8a8a' stroke-width='0.7' stroke-linejoin='round' stroke-linecap='round' />
<path d='M280.8 162.2 L282.7 169.9 L288.8 175.8 L288.5 192.7 L280.4 192.7 L282.7 180.4 Z' fill='#a8a8a8' stroke='#5e5e5e' stroke-width='0.8' stroke-linejoin='round' />
<path d='M268.1 218.8 C269.9 219.6 276.0 229.0 279.6 232.7 C283.2 236.4 291.3 244.2 295 246.5 C298.7 248.8 304.4 250.0 307.3 249.6 C310.2 249.2 313.8 246.8 316.5 243.5 C319.2 240.2 325.6 226.0 327.3 225 C329.0 224.0 330.6 232.5 329.6 235.8 C328.6 239.1 322.6 247.0 319.6 249.6 C316.6 252.2 311.0 254.6 307.3 255 C303.6 255.4 296.0 254.4 291.9 252.7 C287.8 251.0 280.0 245.4 276.5 241.9 C273.0 238.4 266.9 229.6 265.8 226.5 C264.7 223.4 266.3 218.0 268.1 218.8 Z' fill='#b8b8b8' stroke='#5c5c5c' stroke-width='0.8' stroke-linejoin='round' stroke-linecap='round' />
<path d='M259.6 205 C256.5 205.2 243.7 215.5 239.6 220.4 C235.5 225.3 229.4 238.2 228.8 241.9 C228.2 245.6 232.2 249.3 235 248.1 C237.8 246.9 245.9 236.6 249.6 232.7 C253.3 228.8 261.4 222.5 262.7 218.8 C264.0 215.1 262.7 204.8 259.6 205 Z' fill='#d0d0d0' stroke='#5e5e5e' stroke-width='0.9' stroke-linejoin='round' stroke-linecap='round' />
<path d='M248.1 223.5 C244.5 226.8 240.4 232.0 238.1 235.8 C235.8 239.6 232.3 247.0 234.2 246.5 C236.1 246.0 245.1 236.9 249.6 232.7 C254.1 228.5 259.5 224.0 261.2 221.2 C262.9 218.4 261.8 215.4 259.6 215.8 C257.4 216.2 251.7 220.2 248.1 223.5 Z' fill='#9c9c9c' />
<path d='M235 248.1 C237.1 245.1 245.9 236.5 249.6 232.7 C253.3 228.9 260.5 220.2 262.7 219.6 C264.9 219.0 264.0 224.9 265.8 228.1 C267.6 231.3 275.5 239.9 276.5 243.5 C277.5 247.1 279.2 253.5 273.5 255 C267.8 256.5 238.6 255.9 233.5 255 C228.4 254.1 232.9 251.1 235 248.1 Z' fill='#cdcdcd' stroke='#666' stroke-width='0.8' stroke-linejoin='round' stroke-linecap='round' />
<defs><linearGradient id='rpad' gradientUnits='userSpaceOnUse' x1='505' y1='150' x2='560' y2='230'><stop offset='0' stop-color='#c2c2c2'/><stop offset='0.5' stop-color='#cecece'/><stop offset='1' stop-color='#c6c6c6'/></linearGradient></defs>
<path d='M506.9 145.4 C509.8 144.5 529.8 157.8 533.8 160.8 C537.8 163.8 540.2 168.6 541.5 171.5 C542.8 174.4 543.3 181.6 544.6 185.4 C545.9 189.2 550.7 201.1 552.3 203.8 C553.9 206.5 557.5 206.3 558.5 208.5 C559.5 210.7 560.6 218.9 560.8 222.3 C561.0 225.7 559.9 235.2 560 237.7 C560.1 240.2 561.7 242.5 561.5 243.8 C561.3 245.1 559.6 249.0 558.5 249.2 C557.4 249.4 553.6 245.5 552.3 245.4 C551.0 245.3 549.7 248.3 547.7 248.5 C545.7 248.7 537.9 248.2 535.4 246.9 C532.9 245.6 528.2 241.3 526.2 237.7 C524.2 234.1 520.0 221.6 518.5 216.2 C517.0 210.8 514.2 197.1 513.1 191.5 C512.0 185.9 509.9 173.9 509.2 168.5 C508.5 163.1 504.0 146.3 506.9 145.4 Z' fill='url(#rpad)' stroke='#666' stroke-width='0.8' stroke-linejoin='round' stroke-linecap='round' />
<path d='M500 153.1 C500.1 149.0 505.5 143.3 506.9 145.4 C508.3 147.5 509.5 162.4 510.8 168.5 C512.1 174.6 514.8 185.1 516.9 191.5 C519.0 197.9 525.8 212.1 526.2 216.2 C526.6 220.3 521.7 224.4 520 222.3 C518.3 220.2 514.9 206.9 513.1 200.8 C511.3 194.7 507.9 182.6 506.2 176.2 C504.5 169.8 499.9 157.2 500 153.1 Z' fill='#d8d8d8' stroke='#666' stroke-width='0.8' stroke-linejoin='round' stroke-linecap='round' />
<path d='M536.9 165.4 C537.2 168.0 537.9 175.2 538.5 180.8 C539.1 186.4 540.0 193.8 540.8 199.2 C541.6 204.6 542.7 210.8 543.1 213.1' fill='none' stroke='#5a5a5a' stroke-width='0.9' stroke-linejoin='round' stroke-linecap='round' />
<path d='M541.5 173.1 C542.5 176.7 545.9 189.0 547.7 194.6 C549.5 200.2 551.5 204.8 552.3 206.9' fill='none' stroke='#777' stroke-width='0.8' stroke-linejoin='round' stroke-linecap='round' />
<path d='M518.5 202.3 C520.5 204.6 527.0 213.4 530.8 216.2 C534.6 219.0 537.9 219.7 541.5 219.2 C545.1 218.7 550.5 214.1 552.3 213.1' fill='none' stroke='#6a6a6a' stroke-width='0.9' stroke-linejoin='round' stroke-linecap='round' />
<path d='M526.2 228.5 C528.2 229.8 534.4 236.2 538.5 236.2 C542.6 236.2 547.2 230.8 550.8 228.5 C554.4 226.2 558.5 223.3 560 222.3' fill='none' stroke='#777' stroke-width='0.8' stroke-linejoin='round' stroke-linecap='round' />
<path d='M526.2 210 C528.2 209.8 537.1 220.2 541.5 220.8 C545.9 221.4 551.3 213.0 552.3 213.8 C553.3 214.6 550.0 222.7 547.7 225.4 C545.4 228.1 541.6 230.5 538.5 230 C535.4 229.5 531.2 225.6 529.2 222.3 C527.2 219.0 524.2 210.2 526.2 210 Z' fill='#b2b2b2' />
<path d='M543.1 237.7 C543.6 236.5 545.9 235.9 547.7 236.2 C549.5 236.4 553.3 237.9 553.8 239.2 C554.3 240.5 552.3 243.2 550.8 243.8 C549.3 244.5 545.9 244.1 544.6 243.1 C543.3 242.1 542.6 238.8 543.1 237.7 Z' fill='#e4e4e4' stroke='#777' stroke-width='0.6' stroke-linejoin='round' stroke-linecap='round' />
<path d='M489.2 130 C491.3 130.0 497.7 146.9 500 153.1 C502.3 159.3 504.5 169.8 506.2 176.2 C507.9 182.6 511.3 194.7 513.1 200.8 C514.9 206.9 519.5 217.4 520 222.3 C520.5 227.2 518.5 237.3 516.9 237.7 C515.3 238.1 510.2 230.5 507.7 225.4 C505.2 220.3 500.6 205.8 498.5 199.2 C496.4 192.6 494.2 182.3 492.3 176.2 C490.4 170.1 485.0 159.3 484.6 153.1 C484.2 146.9 487.1 130.0 489.2 130 Z' fill='#c4c4c4' stroke='#5e5e5e' stroke-width='0.9' stroke-linejoin='round' stroke-linecap='round' />
<path d='M498.5 199.2 C499.9 198.6 505.2 220.3 507.7 225.4 C510.2 230.5 516.5 233.1 516.9 237.7 C517.3 242.3 513.7 257.0 510.8 260 C507.9 263.0 497.3 264.0 495.4 260 C493.5 256.0 496.5 238.1 496.9 230 C497.3 221.9 497.1 199.8 498.5 199.2 Z' fill='#b8b8b8' stroke='#666' stroke-width='0.8' stroke-linejoin='round' stroke-linecap='round' />
<path d='M503.1 216.2 C503.6 219.8 507.0 230.4 506.2 237.7 C505.4 245.0 499.8 256.3 498.5 260' fill='none' stroke='#555' stroke-width='1' stroke-linejoin='round' stroke-linecap='round' />
<path d='M510.8 228.5 C511.1 231.6 513.1 241.7 512.3 246.9 C511.5 252.2 507.2 257.8 506.2 260' fill='none' stroke='#666' stroke-width='0.9' stroke-linejoin='round' stroke-linecap='round' />
<defs><linearGradient id='rarm' gradientUnits='userSpaceOnUse' x1='500' y1='290' x2='600' y2='300'><stop offset='0' stop-color='#c6c6c6'/><stop offset='0.4' stop-color='#d6d6d6'/><stop offset='1' stop-color='#bcbcbc'/></linearGradient></defs>
<path d='M516.9 249.2 C519.2 247.2 526.1 245.5 530.8 246.2 C535.5 246.9 552.4 253.4 556.9 255.4 C561.4 257.4 566.5 261.0 569.2 263.1 C571.9 265.2 577.8 271.1 580 273.8 C582.2 276.5 585.9 283.7 587.7 286.2 C589.5 288.7 593.8 292.4 595.4 295.4 C597.0 298.4 600.1 308.7 601.5 312.3 C602.9 315.9 609.3 323.9 607.7 326.2 C606.1 328.5 592.5 330.9 587.7 332.3 C582.9 333.7 570.3 337.1 566.2 338.5 C562.1 339.9 555.2 343.7 552.3 344.6 C549.4 345.5 543.5 346.9 541.5 346.2 C539.5 345.5 536.5 340.8 535.4 338.5 C534.3 336.2 534.1 329.6 532.3 326.2 C530.5 322.8 523.2 313.3 520 309.2 C516.8 305.1 506.9 294.0 504.6 290.8 C502.3 287.6 499.3 284.7 500 281.5 C500.7 278.3 508.8 266.9 510.8 263.1 C512.8 259.3 514.6 251.2 516.9 249.2 Z' fill='url(#rarm)' stroke='#666' stroke-width='0.8' stroke-linejoin='round' stroke-linecap='round' />
<path d='M520 252.3 C521.0 249.8 532.5 246.9 535.4 247.7 C538.3 248.5 539.7 254.8 541.5 258.5 C543.3 262.2 548.6 272.1 549.2 275.4 C549.8 278.7 547.8 282.9 546.2 283.1 C544.6 283.3 539.4 279.2 536.9 276.9 C534.4 274.6 530.0 269.5 527.7 266.2 C525.4 262.9 519.0 254.8 520 252.3 Z' fill='#d6d6d6' stroke='#5a5a5a' stroke-width='0.9' stroke-linejoin='round' stroke-linecap='round' />
<path d='M541.5 258.5 C542.0 255.4 549.2 254.8 552.3 256.9 C555.4 258.9 560.5 267.7 560 270.8 C559.5 273.9 552.3 277.4 549.2 275.4 C546.1 273.3 541.0 261.6 541.5 258.5 Z' fill='#b8b8b8' stroke='#666' stroke-width='0.8' stroke-linejoin='round' stroke-linecap='round' />
<path d='M510.8 264.6 C512.9 268.2 518.5 279.5 523.1 286.2 C527.7 292.9 535.9 301.5 538.5 304.6' fill='none' stroke='#606060' stroke-width='0.9' stroke-linejoin='round' stroke-linecap='round' />
<path d='M504.6 278.5 C506.9 282.1 514.1 294.1 518.5 300 C522.9 305.9 528.8 311.5 530.8 313.8' fill='none' stroke='#6a6a6a' stroke-width='0.8' stroke-linejoin='round' stroke-linecap='round' />
<path d='M513.8 286.2 C516.4 287.0 524.1 290.8 529.2 290.8 C534.3 290.8 542.0 287.0 544.6 286.2' fill='none' stroke='#777' stroke-width='0.8' stroke-linejoin='round' stroke-linecap='round' />
<ellipse cx='535.7' cy='312.3' rx='7.5' ry='8.5' fill='#bdbdbd' stroke='#5a5a5a' stroke-width='.9'/>
<ellipse cx='535.2' cy='312.3' rx='5' ry='6' fill='#a8a8a8' stroke='#666' stroke-width='.8'/>
<ellipse cx='534.7' cy='312.3' rx='2.6' ry='3.3' fill='#cfcfcf' stroke='#666' stroke-width='.7'/>
<path d='M572.3 290.8 C574.2 289.0 581.7 285.8 584.6 286.2 C587.5 286.6 592.2 291.1 593.8 293.8 C595.4 296.5 597.7 303.7 596.9 306.2 C596.1 308.7 590.6 311.9 587.7 312.3 C584.8 312.7 577.8 310.8 575.4 309.2 C573.0 307.6 570.4 302.5 570 300 C569.6 297.5 570.4 292.6 572.3 290.8 Z' fill='#c2c2c2' stroke='#5c5c5c' stroke-width='0.9' stroke-linejoin='round' stroke-linecap='round' />
<path d='M575.4 298.5 L584.6 293.1 L587.7 295.4 L578.5 301.5 L580 306.2 L576.2 304.6 Z' fill='#d2d2d2' stroke='#777' stroke-width='0.6' stroke-linejoin='round' />
<path d='M558.5 286.2 C559.0 283.9 563.4 283.1 566.2 283.1 C569.0 283.1 574.4 284.9 575.4 286.2 C576.4 287.5 573.3 288.2 572.3 290.8 C571.3 293.4 570.7 300.5 569.2 301.5 C567.7 302.5 564.9 299.4 563.1 296.9 C561.3 294.3 558.0 288.5 558.5 286.2 Z' fill='#cdcdcd' stroke='#606060' stroke-width='0.8' stroke-linejoin='round' stroke-linecap='round' />
<path d='M567.7 284.6 C568.1 285.6 569.6 289.8 570 290.8' fill='none' stroke='#555' stroke-width='0.8' stroke-linejoin='round' stroke-linecap='round' />
<path d='M570.8 283.8 C571.2 284.8 572.7 289.0 573.1 290' fill='none' stroke='#555' stroke-width='0.8' stroke-linejoin='round' stroke-linecap='round' />
<path d='M573.8 284.3 C574.1 285.1 575.4 288.1 575.7 288.9' fill='none' stroke='#555' stroke-width='0.8' stroke-linejoin='round' stroke-linecap='round' />
<path d='M587.7 326.2 C589.5 323.9 593.6 321.0 596.9 321.5 C600.2 322.0 605.4 325.3 607.7 329.2 C610.0 333.1 611.8 341.0 610.8 344.6 C609.8 348.2 604.8 350.5 601.5 350.8 C598.2 351.1 593.3 348.8 590.8 346.2 C588.2 343.6 586.7 338.7 586.2 335.4 C585.7 332.1 585.9 328.5 587.7 326.2 Z' fill='#848484' stroke='#4e4e4e' stroke-width='0.8' stroke-linejoin='round' stroke-linecap='round' />
<path d='M576.9 346.2 C577.4 344.1 583.9 339.8 586.2 340 C588.5 340.2 591.3 345.6 590.8 347.7 C590.3 349.8 585.4 352.6 583.1 352.3 C580.8 352.1 576.4 348.2 576.9 346.2 Z' fill='#6e6e6e' />
<path d='M541.5 326.2 C542.5 324.4 548.7 320.5 552.3 320 C555.9 319.5 560.3 321.1 563.1 323.1 C565.9 325.2 569.2 330.2 569.2 332.3 C569.2 334.4 565.4 336.2 563.1 335.4 C560.8 334.6 558.2 328.5 555.4 327.7 C552.6 326.9 548.5 331.1 546.2 330.8 C543.9 330.6 540.5 328.0 541.5 326.2 Z' fill='#b0b0b0' stroke='#555' stroke-width='0.9' stroke-linejoin='round' stroke-linecap='round' />
<path d='M535.4 335.4 C535.9 333.1 541.8 331.8 544.6 332.3 C547.4 332.8 551.0 336.4 552.3 338.5 C553.6 340.6 554.1 343.3 552.3 344.6 C550.5 345.9 544.3 347.7 541.5 346.2 C538.7 344.7 534.9 337.7 535.4 335.4 Z' fill='#c6c6c6' stroke='#606060' stroke-width='0.8' stroke-linejoin='round' stroke-linecap='round' />
<path d='M550.8 304.6 C551.6 302.8 557.3 297.5 560 298.5 C562.7 299.5 569.2 309.0 570.8 312.3 C572.4 315.6 573.3 322.1 572.3 323.1 C571.3 324.1 565.6 321.4 563.1 320 C560.6 318.6 555.4 314.4 553.8 312.3 C552.2 310.2 550.0 306.4 550.8 304.6 Z' fill='#c9c9c9' stroke='#666' stroke-width='0.8' stroke-linejoin='round' stroke-linecap='round' />
<path d='M556.9 346.2 C557.9 343.3 563.3 338.3 566.2 338.5 C569.1 338.7 576.7 344.8 578.5 347.7 C580.3 350.6 580.0 357.0 580 360 C580.0 363.0 581.0 368.7 578.5 370 C576.0 371.3 564.2 371.3 561.5 370 C558.8 368.7 559.1 363.2 558.5 360 C557.9 356.8 555.9 349.1 556.9 346.2 Z' fill='#d0d0d0' stroke='#606060' stroke-width='0.8' stroke-linejoin='round' stroke-linecap='round' />
<path d='M580 356.9 C581.6 354.3 587.7 351.2 590.8 350.8 C593.9 350.4 599.8 354.2 603.1 353.8 C606.4 353.4 612.5 348.7 615.4 347.7 C618.3 346.7 622.8 344.8 624.6 346.2 C626.4 347.6 629.0 355.3 629.2 358.5 C629.4 361.7 633.0 368.5 626.2 370 C619.4 371.5 584.7 371.7 578.5 370 C572.3 368.3 578.4 359.5 580 356.9 Z' fill='#cbcbcb' stroke='#606060' stroke-width='0.8' stroke-linejoin='round' stroke-linecap='round' />
<path d='M607.7 326.9 C608.5 325.1 614.6 325.3 616.9 327.7 C619.2 330.1 624.4 341.9 624.6 344.6 C624.8 347.3 620.3 348.1 618.5 347.7 C616.7 347.3 612.2 344.3 610.8 341.5 C609.4 338.7 606.9 328.7 607.7 326.9 Z' fill='#d2d2d2' stroke='#666' stroke-width='0.8' stroke-linejoin='round' stroke-linecap='round' />
<path d='M556.9 345 C558.3 343.9 565.2 343.4 567.5 344.4 C569.8 345.4 572.6 349.8 573.8 352.5 C575.0 355.2 575.8 361.5 576.2 365 C576.6 368.5 577.6 376.7 576.9 378.8 C576.2 380.9 572.6 381.4 571.2 380.6 C569.8 379.8 567.5 375.1 566.2 372.5 C564.9 369.9 562.4 363.9 561.2 361.2 C560.0 358.5 557.5 354.7 556.9 352.5 C556.3 350.3 555.5 346.1 556.9 345 Z' fill='#cfcfcf' stroke='#606060' stroke-width='0.8' stroke-linejoin='round' stroke-linecap='round' />
<path d='M567.5 346.2 C567.8 343.9 571.8 350.5 573.1 353.8 C574.5 357.1 575.1 362.1 575.6 366.2 C576.1 370.2 576.4 375.9 576 378.1 C575.6 380.3 573.9 381.2 573.1 379.4 C572.3 377.6 572.1 373.0 571.2 367.5 C570.3 362.0 567.2 348.5 567.5 346.2 Z' fill='#b0b0b0' />
<path d='M581.2 356.2 C582.0 354.0 586.5 354.0 588.8 353.8 C591.1 353.6 597.6 353.3 598.8 355 C600.0 356.7 599.2 363.5 597.5 366.2 C595.8 368.9 588.2 374.5 586.2 375 C584.2 375.5 583.2 372.5 582.5 370 C581.8 367.5 580.4 358.4 581.2 356.2 Z' fill='#d0d0d0' stroke='#555' stroke-width='0.8' stroke-linejoin='round' stroke-linecap='round' />
<path d='M600 355 C601.1 353.5 607.3 349.0 610 348.8 C612.7 348.6 617.7 352.1 620 353.8 C622.3 355.5 627.0 359.4 627.5 361.2 C628.0 363.0 626.1 367.0 623.8 367.5 C621.5 368.0 612.9 366.0 610 365 C607.1 364.0 603.2 361.3 601.9 360 C600.6 358.7 598.9 356.5 600 355 Z' fill='#d2d2d2' stroke='#555' stroke-width='0.8' stroke-linejoin='round' stroke-linecap='round' />
<path d='M586.2 375 C587.2 373.2 595.4 368.2 597.5 366.2 C599.6 364.2 600.2 360.2 601.9 360 C603.6 359.8 607.1 364.0 610 365 C612.9 366.0 622.1 366.3 623.8 367.5 C625.5 368.7 624.9 373.1 623.1 373.8 C621.3 374.5 613.7 372.2 610 372.5 C606.3 372.8 597.7 375.2 595 376.2 C592.3 377.2 591.2 380.2 590 380 C588.8 379.8 585.2 376.8 586.2 375 Z' fill='#c4c4c4' stroke='#5a5a5a' stroke-width='0.8' stroke-linejoin='round' stroke-linecap='round' />
<path d='M610 330 C610.7 328.5 615.0 326.8 617.5 330 C620.0 333.2 627.6 349.5 628.8 353.8 C630.0 358.1 627.4 362.5 626.2 362.5 C625.0 362.5 621.8 356.6 620 353.8 C618.2 351.0 613.8 344.4 612.5 341.2 C611.2 338.0 609.3 331.5 610 330 Z' fill='#d6d6d6' stroke='#666' stroke-width='0.8' stroke-linejoin='round' stroke-linecap='round' />
<path d='M582.5 332.5 C584.5 331.2 591.7 333.3 595 335 C598.3 336.7 606.2 342.8 607.5 345 C608.8 347.2 606.7 350.2 605 351.2 C603.3 352.2 597.5 352.8 595 352.5 C592.5 352.2 588.2 349.8 586.2 348.8 C584.2 347.8 580.5 347.2 580 345 C579.5 342.8 580.5 333.8 582.5 332.5 Z' fill='#a0a0a0' stroke='#555' stroke-width='0.7' stroke-linejoin='round' stroke-linecap='round' />
<path d='M595 380 C595.3 378.2 598.7 379.2 600 381.2 C601.3 383.2 603.3 391.5 605 395 C606.7 398.5 610.5 404.5 612.5 407.5 C614.5 410.5 619.3 415.5 620 417.5 C620.7 419.5 618.8 422.5 617.5 422.5 C616.2 422.5 612.0 419.5 610 417.5 C608.0 415.5 604.1 410.5 602.5 407.5 C600.9 404.5 599.1 398.7 598.1 395 C597.1 391.3 594.7 381.8 595 380 Z' fill='#bdbdbd' stroke='#555' stroke-width='0.8' stroke-linejoin='round' stroke-linecap='round' />
<path d='M605 378.8 C605.3 377.3 610.5 377.3 612.5 377.5 C614.5 377.7 618.7 378.5 620 380 C621.3 381.5 622.2 387.1 621.9 388.8 C621.6 390.5 619.1 392.5 617.5 392.5 C615.9 392.5 611.7 390.6 610 388.8 C608.3 387.0 604.7 380.3 605 378.8 Z' fill='#b4b4b4' stroke='#555' stroke-width='0.7' stroke-linejoin='round' stroke-linecap='round' />
<path d='M575 395 C576.9 395.0 582.7 395.8 586.2 395 C589.7 394.2 594.5 390.8 596.2 390' fill='none' stroke='#6a6a6a' stroke-width='0.8' stroke-linejoin='round' stroke-linecap='round' />
<path d='M573.8 411.2 C575.5 412.0 580.3 416.2 583.8 416.2 C587.3 416.2 592.1 412.5 595 411.2 C597.9 409.9 600.2 408.6 601.2 408.1' fill='none' stroke='#6a6a6a' stroke-width='0.8' stroke-linejoin='round' stroke-linecap='round' />
<path d='M570 421.2 C571.7 421.9 576.2 425.3 580 425.6 C583.8 425.9 588.3 424.6 592.5 423.1 C596.7 421.7 602.9 417.9 605 416.9' fill='none' stroke='#5e5e5e' stroke-width='0.9' stroke-linejoin='round' stroke-linecap='round' />
<path d='M572.5 430.6 C574.8 431.2 581.6 434.3 586.2 434 C590.8 433.7 596.0 430.5 600 429 C604.0 427.5 608.3 425.8 610 425.2' fill='none' stroke='#5e5e5e' stroke-width='0.9' stroke-linejoin='round' stroke-linecap='round' />
<path d='M575 433.1 L585.6 432 L587.8 443.7 L589.9 450.1 L582.5 444.5 L575.6 437.9 Z' fill='#a8a8a8' stroke='#4e4e4e' stroke-width='0.8' stroke-linejoin='round' />
<path d='M586.7 433.1 L599.4 424.6 L611.1 416.1 L612.7 422.5 L610.1 429.9 L599.4 437.3 L597.3 443.7 L589.9 450.1 L587.8 443.7 Z' fill='#cdcdcd' stroke='#4e4e4e' stroke-width='0.8' stroke-linejoin='round' />
<defs><linearGradient id='larm' gradientUnits='userSpaceOnUse' x1='222' y1='280' x2='270' y2='290'><stop offset='0' stop-color='#dcdcdc'/><stop offset='0.35' stop-color='#d4d4d4'/><stop offset='0.7' stop-color='#c2c2c2'/><stop offset='1' stop-color='#b0b0b0'/></linearGradient></defs>
<path d='M228.8 241.2 C227.9 242.7 234.0 247.5 233.8 250 C233.6 252.5 228.5 259.4 227.5 262.5 C226.5 265.6 225.4 272.4 225 276.2 C224.6 280.0 224.2 291.1 223.8 295 C223.4 298.9 222.3 306.5 221.9 310 C221.5 313.5 220.8 321.4 220.6 325 C220.4 328.6 213.1 339.1 220 341 C226.9 342.9 272.4 341.4 280 341 C287.6 340.6 285.3 338.5 285 337.5 C284.7 336.5 279.2 332.9 277.5 332.5 C275.8 332.1 271.3 334.4 270 333.8 C268.7 333.2 266.5 329.7 266.2 327.5 C265.9 325.3 267.1 317.6 267.5 315 C267.9 312.4 269.3 307.0 270 305 C270.7 303.0 272.6 299.1 273.8 297.5 C275.0 295.9 278.7 292.2 280 291.2 C281.3 290.2 283.7 289.5 285 288.8 C286.3 288.1 289.7 286.8 291.2 285 C292.7 283.2 295.6 276.3 297.5 273.8 C299.4 271.3 306.6 265.3 307.5 263.8 C308.4 262.3 306.2 261.2 305 260.6 C303.8 260.0 299.5 259.0 297.5 258.8 C295.5 258.6 290.1 259.0 287.5 258.8 C284.9 258.6 278.2 259.4 275 257.5 C271.8 255.6 263.9 244.8 260 242.5 C256.1 240.2 244.8 237.7 241.2 237.5 C237.6 237.3 229.7 239.7 228.8 241.2 Z' fill='url(#larm)' stroke='#777' stroke-width='0.6' stroke-linejoin='round' stroke-linecap='round' />
<path d='M275 260 L287.5 260 L290 261.9 L285 265 L276.2 265 Z' fill='#2a2a2a' />
<path d='M231.2 253.8 C233.0 253.5 238.5 257.5 241.2 260 C243.9 262.5 249.8 268.8 251.2 272.5 C252.6 276.2 252.7 284.3 251.9 287.5 C251.1 290.7 247.3 294.9 245 296.2 C242.7 297.5 237.6 297.8 235 297.5 C232.4 297.2 226.9 296.6 225.6 293.8 C224.3 291.0 224.7 280.4 225 276.2 C225.3 272.0 226.7 265.5 227.5 262.5 C228.3 259.5 229.4 254.1 231.2 253.8 Z' fill='#d8d8d8' stroke='#707070' stroke-width='0.8' stroke-linejoin='round' stroke-linecap='round' />
<path d='M225.6 278.1 C227.0 277.8 230.6 275.1 233.8 276.2 C237.0 277.3 243.2 281.7 245 285 C246.8 288.3 244.5 294.3 244.4 296.2' fill='none' stroke='#777' stroke-width='0.7' stroke-linejoin='round' stroke-linecap='round' />
<path d='M241.2 251.2 C241.7 248.9 248.0 246.3 251.2 247.5 C254.4 248.7 262.7 257.3 265 260 C267.3 262.7 269.5 265.2 268.8 267.5 C268.1 269.8 262.0 276.3 260 277.5 C258.0 278.7 255.5 277.9 253.8 276.2 C252.1 274.5 249.2 268.3 247.5 265 C245.8 261.7 240.7 253.5 241.2 251.2 Z' fill='#b6b6b6' stroke='#5c5c5c' stroke-width='0.8' stroke-linejoin='round' stroke-linecap='round' />
<path d='M243.5 252.2 L247.5 260.6' fill='none' stroke='#6a6a6a' stroke-width='0.9' stroke-linejoin='round' stroke-linecap='round' />
<path d='M247 255 L251 263.9' fill='none' stroke='#6a6a6a' stroke-width='0.9' stroke-linejoin='round' stroke-linecap='round' />
<path d='M250.5 257.8 L254.5 267.1' fill='none' stroke='#6a6a6a' stroke-width='0.9' stroke-linejoin='round' stroke-linecap='round' />
<path d='M254 260.5 L258 270.4' fill='none' stroke='#6a6a6a' stroke-width='0.9' stroke-linejoin='round' stroke-linecap='round' />
<path d='M257.5 263.2 L261.5 273.6' fill='none' stroke='#6a6a6a' stroke-width='0.9' stroke-linejoin='round' stroke-linecap='round' />
<path d='M253.8 260 C255.4 257.5 260.8 257.1 262.5 258.8 C264.2 260.5 264.4 267.1 263.8 270 C263.2 272.9 260.6 275.6 258.8 276.2 C257.0 276.8 253.9 276.5 253.1 273.8 C252.3 271.1 252.2 262.5 253.8 260 Z' fill='#c8c8c8' stroke='#606060' stroke-width='0.7' stroke-linejoin='round' stroke-linecap='round' />
<ellipse cx='290' cy='276.2' rx='9' ry='10.5' transform='rotate(20 290 276.2)' fill='#bcbcbc' stroke='#5a5a5a' stroke-width='.9'/>
<ellipse cx='290.8' cy='276.2' rx='6' ry='7.5' transform='rotate(20 290 276.2)' fill='#a6a6a6' stroke='#666' stroke-width='.8'/>
<ellipse cx='291.4' cy='276.2' rx='3.2' ry='4.5' transform='rotate(20 290 276.2)' fill='#c8c8c8' stroke='#666' stroke-width='.7'/>
<path d='M268.8 272.5 C270.5 270.0 277.7 265.4 280 267.5 C282.3 269.6 283.3 281.9 282.5 285 C281.7 288.1 277.1 286.6 275 286.2 C272.9 285.8 271.0 284.8 270 282.5 C269.0 280.2 267.1 275.0 268.8 272.5 Z' fill='#c2c2c2' stroke='#606060' stroke-width='0.7' stroke-linejoin='round' stroke-linecap='round' />
<path d='M290 260 C291.5 258.6 297.1 258.2 300 258.8 C302.9 259.4 307.9 261.3 307.5 263.8 C307.1 266.3 300.2 273.2 297.5 273.8 C294.8 274.4 292.4 269.8 291.2 267.5 C289.9 265.2 288.5 261.4 290 260 Z' fill='#d0d0d0' stroke='#606060' stroke-width='0.8' stroke-linejoin='round' stroke-linecap='round' />
<path d='M275 245 C277.0 244.5 286.0 252.3 290 253.8 C294.0 255.3 301.0 256.0 305 256.2 C309.0 256.4 318.2 254.6 320 255 C321.8 255.4 320.8 258.7 318.8 259.4 C316.8 260.1 309.2 260.7 305 260.6 C300.8 260.5 291.5 259.2 287.5 258.8 C283.5 258.4 276.7 259.3 275 257.5 C273.3 255.7 273.0 245.5 275 245 Z' fill='#b4b4b4' stroke='#606060' stroke-width='0.8' stroke-linejoin='round' stroke-linecap='round' />
<path d='M252.5 278.8 C254.5 277.8 262.0 281.3 265 282.5 C268.0 283.7 275.2 285.2 275 287.5 C274.8 289.8 266.0 297.0 263.8 300 C261.6 303.0 260.5 309.7 258.8 310 C257.1 310.3 252.4 305.2 251.2 302.5 C250.0 299.8 249.8 293.2 250 290 C250.2 286.8 250.5 279.8 252.5 278.8 Z' fill='#b2b2b2' stroke='#666' stroke-width='0.7' stroke-linejoin='round' stroke-linecap='round' />
<path d='M263.8 300 C265.5 296.5 272.2 290.3 275 288.8 C277.8 287.3 285.2 287.6 285 288.8 C284.8 290.0 275.8 295.3 273.8 297.5 C271.8 299.7 270.8 302.7 270 305 C269.2 307.3 268.5 313.7 267.5 315 C266.5 316.3 263.0 317.0 262.5 315 C262.0 313.0 262.1 303.5 263.8 300 Z' fill='#d2d2d2' stroke='#666' stroke-width='0.7' stroke-linejoin='round' stroke-linecap='round' />
<path d='M225 297.5 C228.4 295.8 244.2 295.8 247.5 297.5 C250.8 299.2 249.8 307.0 250 310 C250.2 313.0 251.1 319.0 248.8 320 C246.5 321.0 236.1 318.8 232.5 317.5 C228.9 316.2 222.9 312.7 221.9 310 C220.9 307.3 221.6 299.2 225 297.5 Z' fill='#cdcdcd' stroke='#777' stroke-width='0.6' stroke-linejoin='round' stroke-linecap='round' />
<path d='M228.8 318.8 C229.3 317.1 230.8 315.7 233.8 316.9 C236.8 318.1 247.0 324.3 251.2 327.5 C255.4 330.7 266.3 339.2 265 341 C263.7 342.8 245.9 342.5 241.2 341 C236.5 339.5 231.7 333.0 230 330 C228.3 327.0 228.3 320.5 228.8 318.8 Z' fill='#c0c0c0' stroke='#555' stroke-width='0.9' stroke-linejoin='round' stroke-linecap='round' />
<path d='M233.8 317.5 C233.7 318.8 232.3 322.1 233.1 325 C233.9 327.9 236.6 332.3 238.8 335 C241.0 337.7 245.0 340.0 246.2 341' fill='none' stroke='#4e4e4e' stroke-width='1' stroke-linejoin='round' stroke-linecap='round' />
<path d='M220.6 325 C221.8 322.5 226.9 320.4 228.8 322.5 C230.7 324.6 236.2 338.5 235 341 C233.8 343.5 221.9 343.1 220 341 C218.1 338.9 219.4 327.5 220.6 325 Z' fill='#adadad' stroke='#666' stroke-width='0.7' stroke-linejoin='round' stroke-linecap='round' />
<path d='M248.8 320 C250.3 318.3 260.2 314.0 262.5 315 C264.8 316.0 265.9 324.0 266.2 327.5 C266.5 331.0 267.0 341.0 265 341 C263.0 341.0 253.4 330.3 251.2 327.5 C249.0 324.7 247.3 321.7 248.8 320 Z' fill='#c9c9c9' stroke='#666' stroke-width='0.7' stroke-linejoin='round' stroke-linecap='round' />
<path d='M221.2 322.5 C222.2 320.3 226.5 317.8 230 318.8 C233.5 319.8 243.2 327.5 247.5 330 C251.8 332.5 262.0 335.7 262.5 337.5 C263.0 339.3 253.4 341.8 251.2 343.8 C249.0 345.8 246.2 349.7 246.2 352.5 C246.2 355.3 251.2 363.0 251.2 365 C251.2 367.0 248.4 368.5 246.2 367.5 C244.0 366.5 237.5 360.2 235 357.5 C232.5 354.8 229.2 350.5 227.5 347.5 C225.8 344.5 223.3 338.3 222.5 335 C221.7 331.7 220.2 324.7 221.2 322.5 Z' fill='#b8b8b8' stroke='#555' stroke-width='0.8' stroke-linejoin='round' stroke-linecap='round' />
<path d='M223.8 328.8 C225.7 329.2 231.5 329.3 235 331.2 C238.5 333.1 243.3 338.5 245 340' fill='none' stroke='#5e5e5e' stroke-width='0.8' stroke-linejoin='round' stroke-linecap='round' />
<path d='M228.1 336.2 C230.0 336.8 236.2 338.1 239.4 340 C242.6 341.9 246.2 346.2 247.5 347.5' fill='none' stroke='#5e5e5e' stroke-width='0.8' stroke-linejoin='round' stroke-linecap='round' />
<path d='M232.5 343.8 C234.4 344.6 240.9 346.9 243.8 348.8 C246.7 350.7 249.0 354.0 250 355' fill='none' stroke='#5e5e5e' stroke-width='0.8' stroke-linejoin='round' stroke-linecap='round' />
<path d='M236.9 351.2 C238.8 352.2 245.5 355.6 248.1 357.5 C250.7 359.4 251.8 361.7 252.5 362.5' fill='none' stroke='#5e5e5e' stroke-width='0.8' stroke-linejoin='round' stroke-linecap='round' />
<path d='M246.2 343.8 C247.8 342.1 261.6 336.1 265 337.5 C268.4 338.9 273.1 353.0 275 356.2 C276.9 359.4 280.6 362.8 281.2 365 C281.8 367.2 280.7 373.5 280 375 C279.3 376.5 276.5 377.9 275 377.5 C273.5 377.1 269.0 372.9 267.5 371.2 C266.0 369.4 264.4 364.7 262.5 362.5 C260.6 360.3 253.1 354.7 251.2 352.5 C249.3 350.3 244.6 345.6 246.2 343.8 Z' fill='#c6c6c6' stroke='#4e4e4e' stroke-width='0.9' stroke-linejoin='round' stroke-linecap='round' />
<path d='M252.5 341.9 C253.3 343.0 255.3 348.6 257.5 348.8 C259.7 349.0 264.2 344.1 265.6 343.1' fill='none' stroke='#555' stroke-width='0.8' stroke-linejoin='round' stroke-linecap='round' />
<path d='M257.5 348.8 C258.8 351.3 262.1 362.5 265 363.8 C267.9 365.1 273.3 358.0 275 356.9' fill='none' stroke='#555' stroke-width='0.8' stroke-linejoin='round' stroke-linecap='round' />
<path d='M266.2 363.8 C267.2 361.5 272.5 357.1 275 357.5 C277.5 357.9 280.4 363.3 281.2 366.2 C282.0 369.1 281.0 373.1 280 375 C279.0 376.9 276.9 378.1 275 377.5 C273.1 376.9 270.3 373.5 268.8 371.2 C267.3 368.9 265.2 366.1 266.2 363.8 Z' fill='#b0b0b0' stroke='#555' stroke-width='0.7' stroke-linejoin='round' stroke-linecap='round' />
<path d='M252.5 370 C253.5 367.3 260.5 363.7 262.5 365 C264.5 366.3 266.7 376.0 267.5 380 C268.3 384.0 269.5 392.0 268.8 395 C268.1 398.0 264.0 402.2 262.5 402.5 C261.0 402.8 258.5 399.8 257.5 397.5 C256.5 395.2 255.7 388.7 255 385 C254.3 381.3 251.5 372.7 252.5 370 Z' fill='#cacaca' stroke='#606060' stroke-width='0.8' stroke-linejoin='round' stroke-linecap='round' />
<path d='M253.8 376.2 L268.8 375' fill='none' stroke='#666' stroke-width='0.8' stroke-linejoin='round' stroke-linecap='round' />
<path d='M268.8 388.1 C270.2 388.0 277.5 393.9 280 395 C282.5 396.1 287.7 398.1 290 397.5 C292.3 396.9 298.7 389.4 299.4 390 C300.1 390.6 297.2 399.9 296.2 402.5 C295.2 405.1 293.1 411.9 291.2 412.5 C289.3 413.1 282.5 408.8 280 407.5 C277.5 406.2 271.4 402.5 270 401.2 C268.6 399.9 268.2 397.7 268.1 396.2 C268.0 394.7 267.4 388.2 268.8 388.1 Z' fill='#d2d2d2' stroke='#606060' stroke-width='0.8' stroke-linejoin='round' stroke-linecap='round' />
<path d='M270 380 C271.5 378.8 280.2 374.0 282.5 373.1 C284.8 372.2 288.1 372.6 290 371.9 C291.9 371.2 298.1 366.8 298.8 367.5 C299.5 368.2 297.2 375.3 296.2 377.5 C295.2 379.7 291.3 385.6 290 386.2 C288.7 386.8 287.3 382.9 285 382.5 C282.7 382.1 271.8 383.4 270 383.1 C268.2 382.8 268.5 381.2 270 380 Z' fill='#cecece' stroke='#606060' stroke-width='0.8' stroke-linejoin='round' stroke-linecap='round' />
<path d='M275 352.5 C275.9 351.8 283.0 351.2 285 351.2 C287.0 351.2 291.3 351.8 291.9 352.5 C292.5 353.2 291.1 356.6 290 357.5 C288.9 358.4 284.0 360.2 282.5 360.2 C281.0 360.2 278.4 358.4 277.5 357.5 C276.6 356.6 274.1 353.2 275 352.5 Z' fill='#d0d0d0' stroke='#666' stroke-width='0.7' stroke-linejoin='round' stroke-linecap='round' />
<path d='M271.2 332.5 C271.8 331.9 275.9 331.9 277.5 332.5 C279.1 333.1 284.7 336.6 285 337.5 C285.3 338.4 281.5 340.2 280 340.2 C278.5 340.2 273.5 338.7 272.5 337.8 C271.5 336.9 270.6 333.1 271.2 332.5 Z' fill='#d0d0d0' stroke='#666' stroke-width='0.7' stroke-linejoin='round' stroke-linecap='round' />
<defs><linearGradient id='thighL' gradientUnits='userSpaceOnUse' x1='312' y1='330' x2='390' y2='330'><stop offset='0' stop-color='#c4c4c4'/><stop offset='0.2' stop-color='#dadada'/><stop offset='0.55' stop-color='#d6d6d6'/><stop offset='0.85' stop-color='#c4c4c4'/><stop offset='1' stop-color='#a8a8a8'/></linearGradient></defs>
<path d='M361.2 301.2 C365.1 300.2 378.9 306.3 387.3 307.3 C395.8 308.3 403.2 308.3 411.9 307.3 C420.6 306.3 432.4 301.4 439.6 301.2 C446.8 300.9 452.4 291.8 455 305.8 C457.6 319.8 465.8 371.8 455 385 C444.2 398.2 401.7 388.7 390.4 385 C379.1 381.3 388.8 369.0 387.3 362.7 C385.8 356.4 383.8 352.9 381.2 347.3 C378.6 341.7 374.7 334.4 371.9 328.8 C369.1 323.2 366.0 318.1 364.2 313.5 C362.4 308.9 357.3 302.2 361.2 301.2 Z' fill='#bebebe' />
<clipPath id='abdC'><path d='M383 300 L470 300 L474 330 L462 372 L445 392 L410 392 L392 360 L380 325 Z'/></clipPath>
<g clip-path='url(#abdC)'>
<path d='M387.3 306.4 C387.5 308.1 385.0 310.2 383.8 310.8 C382.6 311.4 378.9 312.0 377.4 311.2 C375.9 310.4 371.4 304.9 371 303.6 C370.6 302.3 373.1 300.5 374.4 299.7 C375.7 298.9 380.3 295.7 381.8 296.5 C383.3 297.3 387.1 304.7 387.3 306.4 Z' fill='#d8d8d8' stroke='#5e5e5e' stroke-width='0.8' stroke-linejoin='round' stroke-linecap='round' />
<path d='M402.5 304 C402.3 305.4 399.1 310.8 397.6 311.6 C396.1 312.4 390.6 311.7 389.5 311.1 C388.4 310.5 387.9 307.9 388.3 306.3 C388.7 304.7 391.3 298.1 392.6 297.3 C393.9 296.5 398.4 298.6 399.6 299.4 C400.8 300.2 402.7 302.6 402.5 304 Z' fill='#a8a8a8' stroke='#5e5e5e' stroke-width='0.8' stroke-linejoin='round' stroke-linecap='round' />
<path d='M417.7 304.8 C417.8 306.3 414.1 309.8 412.8 310.6 C411.5 311.4 407.6 313.1 406.3 312 C405.0 310.9 401.2 303.0 401.3 301.3 C401.4 299.6 405.7 298.2 407 297.8 C408.3 297.4 410.9 297.0 412.1 297.8 C413.3 298.6 417.6 303.3 417.7 304.8 Z' fill='#d2d2d2' stroke='#5e5e5e' stroke-width='0.8' stroke-linejoin='round' stroke-linecap='round' />
<path d='M429.4 300.2 C429.5 301.4 428.5 305.3 427.2 306.1 C425.9 306.9 419.3 307.9 418 307.2 C416.7 306.5 416.0 301.6 415.9 300.3 C415.8 299.0 416.2 296.3 417.4 295.7 C418.6 295.1 424.6 294.9 426 295.4 C427.4 295.9 429.3 299.0 429.4 300.2 Z' fill='#c4c4c4' stroke='#5e5e5e' stroke-width='0.8' stroke-linejoin='round' stroke-linecap='round' />
<path d='M444.6 300.9 C444.3 302.5 440.2 309.6 439.1 310.6 C438.1 311.6 436.6 309.9 435.6 309.2 C434.6 308.5 430.9 305.9 430.9 304.5 C430.9 303.1 434.0 297.7 435.2 296.8 C436.4 295.9 440.5 296.4 441.6 296.9 C442.7 297.4 444.9 299.3 444.6 300.9 Z' fill='#c4c4c4' stroke='#5e5e5e' stroke-width='0.8' stroke-linejoin='round' stroke-linecap='round' />
<path d='M460.1 305 C460.4 306.8 458.8 311.4 457.7 312.4 C456.6 313.4 452.4 314.5 450.9 313.4 C449.4 312.3 444.6 304.5 444.6 302.9 C444.6 301.3 450.1 300.2 451.3 299.5 C452.5 298.8 454.3 296.6 455.3 297.2 C456.3 297.8 459.8 303.2 460.1 305 Z' fill='#a8a8a8' stroke='#5e5e5e' stroke-width='0.8' stroke-linejoin='round' stroke-linecap='round' />
<path d='M471.5 304.2 C471.7 305.6 471.4 307.6 470.3 308.1 C469.2 308.6 463.2 308.7 461.8 308.2 C460.4 307.7 458.2 305.2 458.2 303.8 C458.2 302.4 460.2 297.0 461.5 296.1 C462.8 295.2 467.8 295.4 469 296.3 C470.2 297.2 471.3 302.8 471.5 304.2 Z' fill='#cacaca' stroke='#5e5e5e' stroke-width='0.8' stroke-linejoin='round' stroke-linecap='round' />
<path d='M391.9 318.9 C391.9 320.4 391.0 323.1 389.9 323.6 C388.8 324.1 384.0 324.3 382.4 323.5 C380.8 322.7 376.9 318.1 376.5 316.8 C376.1 315.5 377.9 312.7 379.4 312 C380.9 311.3 388.2 310.1 389.7 310.9 C391.2 311.7 391.9 317.4 391.9 318.9 Z' fill='#cacaca' stroke='#5e5e5e' stroke-width='0.8' stroke-linejoin='round' stroke-linecap='round' />
<path d='M409.8 317.2 C410.3 318.7 411.0 322.2 409.9 323.1 C408.8 324.0 401.8 325.3 400 324.8 C398.2 324.3 394.1 320.5 394.1 318.9 C394.1 317.3 398.4 312.5 399.7 311.5 C401.0 310.5 404.2 309.4 405.4 310.1 C406.6 310.8 409.3 315.7 409.8 317.2 Z' fill='#d2d2d2' stroke='#5e5e5e' stroke-width='0.8' stroke-linejoin='round' stroke-linecap='round' />
<path d='M421.4 317.7 C421.7 319.0 420.1 320.8 418.4 321.3 C416.7 321.8 408.3 322.6 406.8 322.3 C405.3 322.0 405.5 320.2 405.7 319 C405.9 317.8 407.6 313.3 408.8 312.3 C410.0 311.3 414.6 309.5 416.1 310.1 C417.6 310.7 421.1 316.4 421.4 317.7 Z' fill='#c4c4c4' stroke='#5e5e5e' stroke-width='0.8' stroke-linejoin='round' stroke-linecap='round' />
<path d='M434.5 315 C434.6 316.6 431.4 321.4 429.8 322 C428.2 322.6 422.0 321.2 420.8 320.2 C419.6 319.2 419.2 314.3 419.4 313.1 C419.6 311.9 421.5 310.3 422.6 309.7 C423.7 309.1 427.2 307.3 428.6 307.9 C430.0 308.5 434.4 313.4 434.5 315 Z' fill='#d2d2d2' stroke='#5e5e5e' stroke-width='0.8' stroke-linejoin='round' stroke-linecap='round' />
<path d='M452.3 317.1 C452.6 318.5 450.7 322.3 448.9 323.2 C447.1 324.1 438.8 325.2 437.1 324.5 C435.4 323.8 434.1 318.6 434.4 316.9 C434.7 315.2 438.6 311.0 440 310.3 C441.4 309.6 445.0 310.3 446.4 311.1 C447.8 311.9 452.0 315.7 452.3 317.1 Z' fill='#d2d2d2' stroke='#5e5e5e' stroke-width='0.8' stroke-linejoin='round' stroke-linecap='round' />
<path d='M467.7 318.2 C467.4 319.6 464.1 322.7 462.7 323.3 C461.3 323.9 456.5 324.1 455.3 323.3 C454.1 322.5 452.1 317.8 452.1 316.1 C452.1 314.4 453.5 309.5 455 308.9 C456.5 308.3 463.5 310.0 465 311.1 C466.5 312.2 468.0 316.8 467.7 318.2 Z' fill='#cacaca' stroke='#5e5e5e' stroke-width='0.8' stroke-linejoin='round' stroke-linecap='round' />
<path d='M481.1 317.8 C480.9 319.2 478.4 323.7 477 324.4 C475.6 325.1 470.6 324.3 469.4 323.8 C468.2 323.3 466.5 321.1 466.8 319.7 C467.1 318.3 470.4 312.8 471.8 311.9 C473.2 311.0 477.6 311.5 478.7 312.2 C479.8 312.9 481.3 316.4 481.1 317.8 Z' fill='#cacaca' stroke='#5e5e5e' stroke-width='0.8' stroke-linejoin='round' stroke-linecap='round' />
<path d='M387.2 326.5 C387.5 327.8 385.2 331.6 383.5 332.3 C381.8 333.0 374.3 333.3 372.7 332.8 C371.1 332.3 369.6 329.2 369.7 327.9 C369.8 326.6 372.4 322.2 373.7 321.4 C375.0 320.6 379.6 320.3 381.2 320.9 C382.8 321.5 386.9 325.2 387.2 326.5 Z' fill='#bcbcbc' stroke='#5e5e5e' stroke-width='0.8' stroke-linejoin='round' stroke-linecap='round' />
<path d='M402.3 327.2 C401.9 328.5 397.9 333.9 396.9 334.8 C395.8 335.7 394.2 336.0 393.3 335.1 C392.4 334.2 389.5 328.3 388.9 326.9 C388.3 325.5 387.1 323.1 388.4 322.8 C389.7 322.5 398.4 323.5 400 324 C401.6 324.5 402.7 325.9 402.3 327.2 Z' fill='#cacaca' stroke='#5e5e5e' stroke-width='0.8' stroke-linejoin='round' stroke-linecap='round' />
<path d='M415.2 328.1 C415.4 329.7 412.3 333.6 410.6 334.4 C408.9 335.2 401.6 335.4 400.4 334.7 C399.2 334.0 400.1 330.1 400.1 328.8 C400.1 327.5 399.1 324.1 400.1 323.2 C401.1 322.3 406.8 320.4 408.6 321 C410.4 321.6 415.0 326.5 415.2 328.1 Z' fill='#a8a8a8' stroke='#5e5e5e' stroke-width='0.8' stroke-linejoin='round' stroke-linecap='round' />
<path d='M429.7 331.1 C429.9 332.5 426.7 335.6 425.2 336.1 C423.7 336.6 418.0 336.6 416.5 335.8 C415.0 335.0 412.2 330.5 412.6 329.2 C413.0 327.9 418.8 325.2 420 324.6 C421.2 324.0 422.2 322.9 423.3 323.7 C424.4 324.5 429.5 329.7 429.7 331.1 Z' fill='#d8d8d8' stroke='#5e5e5e' stroke-width='0.8' stroke-linejoin='round' stroke-linecap='round' />
<path d='M444.6 333.1 C444.4 334.4 442.2 337.1 441.2 337.8 C440.2 338.5 437.3 340.1 436.1 339.3 C434.9 338.5 430.9 332.7 430.5 331.3 C430.1 329.9 431.4 327.5 432.8 327 C434.2 326.5 441.1 325.9 442.5 326.6 C443.9 327.3 444.8 331.8 444.6 333.1 Z' fill='#a8a8a8' stroke='#5e5e5e' stroke-width='0.8' stroke-linejoin='round' stroke-linecap='round' />
<path d='M460.8 330.2 C460.9 331.6 459.2 333.3 457.6 333.6 C456.0 333.9 448.4 333.7 447 333.1 C445.6 332.5 445.0 329.7 445.4 328.5 C445.8 327.3 449.4 323.3 450.8 322.5 C452.2 321.7 455.8 320.9 457 321.8 C458.2 322.7 460.7 328.8 460.8 330.2 Z' fill='#a8a8a8' stroke='#5e5e5e' stroke-width='0.8' stroke-linejoin='round' stroke-linecap='round' />
<path d='M473.9 332 C473.9 333.2 472.8 337.3 471.2 338 C469.6 338.7 461.3 338.6 459.8 337.8 C458.3 337.0 458.0 332.8 458.4 331.2 C458.8 329.6 461.7 324.4 463.2 324 C464.7 323.6 470.4 326.5 471.6 327.4 C472.8 328.3 473.9 330.8 473.9 332 Z' fill='#bcbcbc' stroke='#5e5e5e' stroke-width='0.8' stroke-linejoin='round' stroke-linecap='round' />
<path d='M395.7 342.7 C395.7 343.9 393.6 346.4 392.5 347 C391.4 347.6 387.4 348.7 386 348.2 C384.6 347.7 380.4 344.6 380.1 343.1 C379.8 341.6 381.8 336.5 383.2 335.7 C384.6 334.9 390.7 335.7 392.2 336.5 C393.7 337.3 395.7 341.5 395.7 342.7 Z' fill='#a8a8a8' stroke='#5e5e5e' stroke-width='0.8' stroke-linejoin='round' stroke-linecap='round' />
<path d='M406.9 342.9 C407.1 344.5 405.9 350.4 404.4 351.2 C402.9 352.0 395.7 351.1 394.3 350 C392.9 348.9 392.1 343.6 392.6 342.2 C393.1 340.8 397.6 338.9 398.8 338.4 C400.0 337.9 401.9 337.0 402.8 337.5 C403.7 338.0 406.7 341.3 406.9 342.9 Z' fill='#b4b4b4' stroke='#5e5e5e' stroke-width='0.8' stroke-linejoin='round' stroke-linecap='round' />
<path d='M424.5 341.6 C424.3 343.0 420.0 348.7 418.4 349.7 C416.8 350.7 412.2 351.0 411.1 350 C410.0 349.0 408.4 342.8 408.6 341.4 C408.8 340.0 411.0 338.7 412.4 338.3 C413.8 337.9 419.1 337.3 420.5 337.7 C421.9 338.1 424.7 340.2 424.5 341.6 Z' fill='#cacaca' stroke='#5e5e5e' stroke-width='0.8' stroke-linejoin='round' stroke-linecap='round' />
<path d='M435.8 343.2 C436.4 344.7 435.9 348.0 434.5 348.7 C433.1 349.4 425.4 350.0 423.6 349.2 C421.9 348.4 419.5 343.1 419.5 341.6 C419.5 340.1 422.1 337.2 423.2 336.5 C424.3 335.8 427.8 335.2 429.3 336 C430.8 336.8 435.2 341.7 435.8 343.2 Z' fill='#cacaca' stroke='#5e5e5e' stroke-width='0.8' stroke-linejoin='round' stroke-linecap='round' />
<path d='M452.4 344.1 C452.7 345.5 450.5 349.7 448.9 350.4 C447.3 351.1 439.7 351.2 438.4 350.3 C437.1 349.4 437.3 343.6 437.4 342.4 C437.5 341.2 438.4 340.1 439.5 339.6 C440.6 339.1 445.0 337.5 446.5 338 C448.0 338.5 452.1 342.7 452.4 344.1 Z' fill='#d8d8d8' stroke='#5e5e5e' stroke-width='0.8' stroke-linejoin='round' stroke-linecap='round' />
<path d='M465.4 339.2 C465.5 340.6 462.5 345.9 461.3 346.9 C460.1 347.9 456.3 348.0 455 347.5 C453.7 347.0 450.4 344.1 450.1 342.7 C449.8 341.3 451.5 336.4 452.7 335.5 C453.9 334.6 459.3 334.2 460.8 334.6 C462.3 335.0 465.3 337.8 465.4 339.2 Z' fill='#a8a8a8' stroke='#5e5e5e' stroke-width='0.8' stroke-linejoin='round' stroke-linecap='round' />
<path d='M481.8 341.4 C481.9 343.1 478.1 346.7 476.4 347.2 C474.7 347.7 468.4 346.4 467.2 345.8 C466.0 345.2 465.7 343.3 465.9 341.9 C466.1 340.5 467.9 335.2 469 334.1 C470.1 333.0 473.8 331.7 475.3 332.6 C476.8 333.5 481.7 339.7 481.8 341.4 Z' fill='#d8d8d8' stroke='#5e5e5e' stroke-width='0.8' stroke-linejoin='round' stroke-linecap='round' />
<path d='M389 357.1 C388.9 358.7 384.9 363.6 383.2 364.3 C381.5 365.0 375.6 363.8 374.6 363.3 C373.6 362.8 374.0 361.0 374.5 359.7 C375.0 358.4 377.8 353.0 378.9 351.9 C380.0 350.8 382.5 349.6 383.7 350.2 C384.9 350.8 389.1 355.5 389 357.1 Z' fill='#cacaca' stroke='#5e5e5e' stroke-width='0.8' stroke-linejoin='round' stroke-linecap='round' />
<path d='M402.4 355.5 C402.2 357.1 397.7 362.0 396.3 362.9 C394.9 363.8 391.2 363.7 390.1 362.8 C389.0 361.9 386.7 357.0 386.8 355.5 C386.9 354.0 389.8 350.7 391.1 350 C392.4 349.3 396.7 348.6 398 349.2 C399.3 349.8 402.6 353.9 402.4 355.5 Z' fill='#bcbcbc' stroke='#5e5e5e' stroke-width='0.8' stroke-linejoin='round' stroke-linecap='round' />
<path d='M412.9 352.2 C412.7 353.4 411.4 359.5 410.2 360.3 C409.0 361.1 403.9 359.8 402.7 359.2 C401.5 358.6 399.4 356.9 399.5 355.3 C399.6 353.7 402.4 346.4 403.8 345.7 C405.2 345.0 410.4 348.9 411.5 349.7 C412.6 350.5 413.1 351.0 412.9 352.2 Z' fill='#d2d2d2' stroke='#5e5e5e' stroke-width='0.8' stroke-linejoin='round' stroke-linecap='round' />
<path d='M426.7 355.1 C426.8 356.5 425.7 361.8 424.6 362.7 C423.5 363.6 418.7 363.4 417.2 362.8 C415.7 362.2 412.1 358.8 411.8 357.6 C411.5 356.4 413.4 353.4 414.8 352.6 C416.2 351.8 422.1 350.5 423.5 350.8 C424.9 351.1 426.6 353.7 426.7 355.1 Z' fill='#b4b4b4' stroke='#5e5e5e' stroke-width='0.8' stroke-linejoin='round' stroke-linecap='round' />
<path d='M443.3 352.8 C443.6 354.3 444.1 358.9 442.5 359.8 C440.9 360.7 431.6 361.0 429.8 360.2 C428.0 359.4 427.3 354.0 427.4 352.6 C427.5 351.2 429.4 348.9 430.9 348.3 C432.4 347.7 438.8 346.7 440.2 347.2 C441.6 347.7 443.0 351.3 443.3 352.8 Z' fill='#bcbcbc' stroke='#5e5e5e' stroke-width='0.8' stroke-linejoin='round' stroke-linecap='round' />
<path d='M459.7 352.8 C460.2 354.2 458.9 359.9 457.7 360.9 C456.5 361.9 450.9 362.1 449.3 361.4 C447.7 360.7 443.9 356.1 443.7 354.7 C443.5 353.3 446.4 350.2 447.5 349.5 C448.6 348.8 452.1 348.4 453.5 348.8 C454.9 349.2 459.2 351.4 459.7 352.8 Z' fill='#bcbcbc' stroke='#5e5e5e' stroke-width='0.8' stroke-linejoin='round' stroke-linecap='round' />
<path d='M470.3 353.5 C470.2 355.0 467.9 361.5 466.7 362.7 C465.5 363.9 461.5 364.6 460.2 363.7 C458.9 362.8 455.7 356.8 455.7 355.1 C455.7 353.4 458.6 349.7 459.9 349.1 C461.2 348.5 466.0 349.4 467.2 349.9 C468.4 350.4 470.4 352.0 470.3 353.5 Z' fill='#cacaca' stroke='#5e5e5e' stroke-width='0.8' stroke-linejoin='round' stroke-linecap='round' />
<path d='M396.9 371.5 C397.4 372.8 395.6 374.5 394 374.9 C392.4 375.3 384.6 375.6 383.1 375.1 C381.6 374.6 381.1 371.6 381 370.4 C380.9 369.2 381.6 365.7 382.6 364.9 C383.6 364.1 387.8 362.8 389.5 363.6 C391.2 364.4 396.4 370.2 396.9 371.5 Z' fill='#b4b4b4' stroke='#5e5e5e' stroke-width='0.8' stroke-linejoin='round' stroke-linecap='round' />
<path d='M409 371.4 C408.9 373.1 404.1 376.2 402.7 376.5 C401.3 376.8 397.9 374.5 396.7 373.6 C395.5 372.7 392.8 369.7 392.5 368.5 C392.2 367.3 393.1 364.2 394.4 363.5 C395.7 362.8 401.8 361.3 403.5 362.2 C405.2 363.1 409.1 369.7 409 371.4 Z' fill='#c4c4c4' stroke='#5e5e5e' stroke-width='0.8' stroke-linejoin='round' stroke-linecap='round' />
<path d='M424.6 369.7 C424.4 371.1 421.8 374.3 420.5 375 C419.2 375.7 414.9 376.0 413.5 375.3 C412.1 374.6 409.1 370.6 408.8 369.1 C408.5 367.6 409.4 363.5 410.9 362.8 C412.4 362.1 420.4 362.1 422 362.9 C423.6 363.7 424.8 368.3 424.6 369.7 Z' fill='#d2d2d2' stroke='#5e5e5e' stroke-width='0.8' stroke-linejoin='round' stroke-linecap='round' />
<path d='M433.2 365.7 C432.8 367.0 430.7 373.3 429.2 374.2 C427.7 375.1 421.7 373.6 420.3 373.2 C418.9 372.8 417.0 371.7 417.6 370.4 C418.2 369.1 423.4 362.7 425.1 361.8 C426.8 360.9 431.3 362.4 432.2 362.9 C433.1 363.4 433.6 364.4 433.2 365.7 Z' fill='#cacaca' stroke='#5e5e5e' stroke-width='0.8' stroke-linejoin='round' stroke-linecap='round' />
<path d='M448.3 368.3 C448.4 370.1 445.6 377.0 444.5 378.2 C443.4 379.4 440.5 379.2 439.2 378.4 C437.9 377.6 433.7 373.2 433.3 371.7 C432.9 370.2 434.8 366.7 436 365.6 C437.2 364.5 442.6 362.1 444 362.4 C445.4 362.7 448.2 366.5 448.3 368.3 Z' fill='#b4b4b4' stroke='#5e5e5e' stroke-width='0.8' stroke-linejoin='round' stroke-linecap='round' />
<path d='M465.6 366.8 C465.5 368.0 462.5 372.0 461 372.7 C459.5 373.4 454.3 373.8 452.9 373 C451.5 372.2 448.9 367.3 449.2 365.7 C449.5 364.1 454.0 359.3 455.5 358.9 C457.0 358.5 460.5 361.2 461.7 362.1 C462.9 363.0 465.7 365.6 465.6 366.8 Z' fill='#d2d2d2' stroke='#5e5e5e' stroke-width='0.8' stroke-linejoin='round' stroke-linecap='round' />
<path d='M480 368.1 C480.1 369.5 477.9 373.2 476.2 373.9 C474.5 374.6 467.0 374.5 465.6 374 C464.2 373.5 463.9 370.9 463.8 369.5 C463.7 368.1 463.7 362.6 465 361.7 C466.3 360.8 473.4 360.8 475.2 361.5 C476.9 362.2 479.9 366.7 480 368.1 Z' fill='#c4c4c4' stroke='#5e5e5e' stroke-width='0.8' stroke-linejoin='round' stroke-linecap='round' />
<path d='M388.9 377.7 C388.9 379.1 387.4 384.9 386.4 386 C385.3 387.1 381.2 387.3 379.9 386.8 C378.6 386.3 375.5 383.1 375.4 381.5 C375.3 379.9 377.4 373.8 378.7 372.9 C380.0 372.0 385.1 373.5 386.3 374.1 C387.5 374.7 388.9 376.3 388.9 377.7 Z' fill='#cacaca' stroke='#5e5e5e' stroke-width='0.8' stroke-linejoin='round' stroke-linecap='round' />
<path d='M400.2 381.2 C400.1 382.8 396.9 388.1 395.6 388.9 C394.3 389.7 390.4 389.4 389.1 388.3 C387.8 387.2 384.8 380.9 384.7 379.3 C384.6 377.7 387.2 374.9 388.6 374.5 C390.0 374.1 394.9 374.7 396.3 375.5 C397.7 376.3 400.3 379.6 400.2 381.2 Z' fill='#c4c4c4' stroke='#5e5e5e' stroke-width='0.8' stroke-linejoin='round' stroke-linecap='round' />
<path d='M416.8 383.6 C416.7 385.2 413.2 391.4 411.9 392.2 C410.6 393.0 406.7 391.2 405.3 390.6 C403.9 390.0 400.3 387.9 400.1 386.7 C399.9 385.5 402.3 381.3 403.8 380.3 C405.3 379.3 411.5 378.0 413 378.4 C414.5 378.8 416.9 382.0 416.8 383.6 Z' fill='#d8d8d8' stroke='#5e5e5e' stroke-width='0.8' stroke-linejoin='round' stroke-linecap='round' />
<path d='M428.8 381.4 C428.5 382.9 425.2 390.0 423.8 390.9 C422.4 391.8 418.0 390.3 416.9 389.3 C415.8 388.3 414.0 383.8 414.4 382.4 C414.8 381.0 418.6 377.8 420 377.3 C421.4 376.8 425.3 377.7 426.3 378.2 C427.3 378.7 429.1 379.9 428.8 381.4 Z' fill='#d2d2d2' stroke='#5e5e5e' stroke-width='0.8' stroke-linejoin='round' stroke-linecap='round' />
<path d='M444.2 382.3 C444.1 383.6 439.5 387.0 437.9 387.8 C436.3 388.6 431.4 389.7 430.2 389 C429.0 388.3 427.5 383.6 427.9 381.9 C428.3 380.1 432.2 374.6 433.4 374 C434.6 373.4 437.3 375.4 438.6 376.4 C439.9 377.4 444.3 381.0 444.2 382.3 Z' fill='#bcbcbc' stroke='#5e5e5e' stroke-width='0.8' stroke-linejoin='round' stroke-linecap='round' />
<path d='M457 380.8 C457.0 382.0 456.3 386.1 454.8 386.8 C453.3 387.5 445.5 387.6 443.9 386.8 C442.3 386.0 441.5 380.9 441.4 379.6 C441.3 378.3 441.9 375.9 443.4 375.5 C444.9 375.1 453.0 376.0 454.6 376.6 C456.2 377.2 457.0 379.6 457 380.8 Z' fill='#d2d2d2' stroke='#5e5e5e' stroke-width='0.8' stroke-linejoin='round' stroke-linecap='round' />
<path d='M469.8 378.2 C470.4 379.6 470.7 384.1 469.4 385.1 C468.1 386.1 460.6 386.9 458.9 386.4 C457.2 385.9 454.7 382.2 454.6 380.8 C454.5 379.4 457.1 375.4 458.2 374.5 C459.3 373.6 463.0 372.9 464.4 373.3 C465.8 373.7 469.2 376.8 469.8 378.2 Z' fill='#d2d2d2' stroke='#5e5e5e' stroke-width='0.8' stroke-linejoin='round' stroke-linecap='round' />
</g>
<path d='M390.4 313.5 C392.2 311.4 397.0 308.1 399.6 310.4 C402.2 312.7 405.3 322.2 405.8 327.3 C406.3 332.4 404.8 339.9 402.7 341.2 C400.6 342.5 395.8 338.1 393.5 335 C391.2 331.9 389.3 326.3 388.8 322.7 C388.3 319.1 388.6 315.6 390.4 313.5 Z' fill='#d6d6d6' stroke='#707070' stroke-width='0.8' stroke-linejoin='round' stroke-linecap='round' />
<path d='M415 308.8 C415.8 305.7 421.2 306.2 422.7 308.8 C424.2 311.4 425.0 321.1 424.2 324.2 C423.4 327.3 419.6 329.9 418.1 327.3 C416.6 324.7 414.2 311.9 415 308.8 Z' fill='#a8a8a8' stroke='#666' stroke-width='0.7' stroke-linejoin='round' stroke-linecap='round' />
<circle cx='445' cy='312.2' r='4' fill='#d6d6d6' stroke='#666' stroke-width='.8'/>
<circle cx='405' cy='369.6' r='2.6' fill='#c8c8c8' stroke='#666' stroke-width='.7'/>
<path d='M341.2 264.2 C343.0 264.0 355.1 274.0 359.6 278.1 C364.1 282.2 371.3 291.1 375 295 C378.7 298.9 386.5 305.5 387.3 307.3 C388.1 309.1 384.5 310.0 381.2 308.8 C377.9 307.6 367.4 302.0 362.7 298.1 C358.0 294.2 348.7 284.1 345.8 279.6 C342.9 275.1 339.4 264.4 341.2 264.2 Z' fill='#c4c4c4' stroke='#5a5a5a' stroke-width='0.9' stroke-linejoin='round' stroke-linecap='round' />
<path d='M345.8 279.6 C348.3 281.2 360.6 294.6 362.7 298.1 C364.8 301.6 362.4 305.4 361.2 305.8 C360.0 306.2 355.8 303.9 353.5 301.2 C351.2 298.5 345.2 288.7 344.2 285.8 C343.2 282.9 343.3 278.0 345.8 279.6 Z' fill='#8a8a8a' stroke='#555' stroke-width='0.7' stroke-linejoin='round' stroke-linecap='round' />
<path d='M331.9 270.4 C335.0 270.9 342.6 285.9 345.8 290.4 C349.0 294.9 356.6 304.3 359.6 308.8 C362.6 313.3 369.4 324.3 371.9 328.8 C374.4 333.3 379.4 343.3 381.2 347.3 C383.0 351.3 386.4 358.3 387.3 362.7 C388.2 367.1 388.1 379.6 388.8 385 C389.5 390.4 394.4 403.7 393.5 408.8 C392.6 413.9 386.8 427.0 381.2 428.8 C375.6 430.6 353.7 426.5 345.8 424.2 C337.9 421.9 317.8 413.4 313.5 408.8 C309.2 404.2 309.2 390.4 308.8 385 C308.4 379.6 309.9 367.8 310.4 362.7 C310.9 357.6 312.8 346.0 313.5 341.2 C314.2 336.4 315.8 325.9 316.5 321.2 C317.2 316.5 319.2 305.3 319.6 301.2 C320.0 297.1 318.2 289.4 319.6 285.8 C321.0 282.2 328.8 269.9 331.9 270.4 Z' fill='url(#thighL)' stroke='#5e5e5e' stroke-width='0.9' stroke-linejoin='round' stroke-linecap='round' />
<path d='M325.8 285.8 C326.1 290.9 326.5 307.3 327.3 316.5 C328.1 325.7 328.9 333.5 330.4 341.2 C331.9 348.9 334.7 356.5 336.5 362.7 C338.3 368.9 340.4 375.5 341.2 378.1' fill='none' stroke='#777' stroke-width='0.8' stroke-linejoin='round' stroke-linecap='round' />
<path d='M336.5 288.8 C337.3 293.4 339.1 307.8 341.2 316.5 C343.2 325.2 347.0 333.5 348.8 341.2 C350.6 348.9 351.4 359.1 351.9 362.7' fill='none' stroke='#6a6a6a' stroke-width='0.8' stroke-linejoin='round' stroke-linecap='round' />
<path d='M347.3 301.2 C348.8 304.3 353.2 312.9 356.5 319.6 C359.8 326.3 365.2 334.5 367.3 341.2 C369.4 347.9 368.6 356.5 368.8 359.6' fill='none' stroke='#808080' stroke-width='0.7' stroke-linejoin='round' stroke-linecap='round' />
<path d='M319.6 301.2 C319.1 306.8 317.3 324.8 316.5 335 C315.7 345.2 315.2 358.1 315 362.7' fill='none' stroke='#8a8a8a' stroke-width='0.7' stroke-linejoin='round' stroke-linecap='round' />
<path d='M325.8 275 C327.6 273.2 331.7 272.2 333.5 273.5 C335.3 274.8 337.5 280.6 336.5 282.7 C335.5 284.8 329.6 285.6 327.3 285.8 C325.0 286.1 322.9 286.0 322.7 284.2 C322.4 282.4 324.0 276.8 325.8 275 Z' fill='#c0c0c0' stroke='#777' stroke-width='0.6' stroke-linejoin='round' stroke-linecap='round' />
<circle cx='355' cy='362.7' r='1.1' fill='#333'/>
<circle cx='361.2' cy='363.5' r='1.1' fill='#333'/>
<circle cx='367.3' cy='363.5' r='1.1' fill='#333'/>
<circle cx='318.1' cy='372.7' r='1.1' fill='#333'/>
<circle cx='322.7' cy='370.4' r='1.1' fill='#333'/>
<circle cx='328.1' cy='368.1' r='1.1' fill='#333'/>
<path d='M368.8 341.2 C369.2 339.1 378.7 344.4 381.2 347.3 C383.7 350.2 386.3 357.7 387.3 362.7 C388.3 367.7 389.4 382.0 388.8 385 C388.2 388.0 384.1 388.0 382.7 385 C381.3 382.0 380.0 368.5 378.1 362.7 C376.2 356.9 368.4 343.3 368.8 341.2 Z' fill='#a6a6a6' />
<path d='M327.3 384.2 C332.7 379.9 363.2 381.7 368.8 384.2 C374.4 386.7 372.8 400.8 375 405.8 C377.2 410.8 385.5 422.3 387.3 427.3 C389.1 432.3 391.1 444.1 390.4 448.8 C389.7 453.5 383.9 463.7 381.2 467.3 C378.5 470.9 370.9 478.0 367.3 479.6 C363.7 481.2 353.8 482.6 350.4 481.2 C347.0 479.8 341.0 471.4 338.1 467.3 C335.2 463.2 327.6 451.2 325.8 445.8 C324.0 440.4 322.5 428.4 322.7 421.2 C322.9 414.0 321.9 388.5 327.3 384.2 Z' fill='#9c9c9c' stroke='#555' stroke-width='0.8' stroke-linejoin='round' stroke-linecap='round' />
<path d='M331.9 390.4 C332.3 388.0 338.4 388.1 339.6 388.1 C340.8 388.1 345.8 388.2 346.5 390.4 C347.2 392.6 348.2 412.7 348.1 415 C348.0 417.3 345.9 416.7 345.8 418.1 C345.7 419.5 347.0 430.7 346.5 431.9 C346.0 433.1 340.3 433.3 339.6 432.2 C338.9 431.1 338.6 420.1 338.1 418.8 C337.7 417.5 334.7 418.9 334.2 416.5 C333.7 414.1 331.4 392.8 331.9 390.4 Z' fill='#d2d2d2' stroke='#555' stroke-width='0.8' stroke-linejoin='round' stroke-linecap='round' />
<path d='M352.2 390.4 C352.7 387.8 358.4 388.1 359.6 388.1 C360.8 388.1 366.4 387.9 367 390.4 C367.6 392.9 367.5 415.5 367.3 418.1 C367.1 420.7 365.1 419.1 365 421.2 C364.9 423.2 366.6 440.9 366.1 442.7 C365.6 444.5 359.6 444.5 358.8 442.7 C358.0 440.9 356.9 423.2 356.5 421.2 C356.1 419.2 353.9 421.4 353.5 418.8 C353.1 416.2 351.7 393.0 352.2 390.4 Z' fill='#d4d4d4' stroke='#555' stroke-width='0.8' stroke-linejoin='round' stroke-linecap='round' />
<path d='M334.2 415.3 L348.1 414.7' fill='none' stroke='#555' stroke-width='0.8' stroke-linejoin='round' stroke-linecap='round' />
<path d='M353.5 418.1 L367.3 417.8' fill='none' stroke='#555' stroke-width='0.8' stroke-linejoin='round' stroke-linecap='round' />
<path d='M331.9 434.2 C335.0 434.2 352.5 444.1 356.5 445 C360.5 445.9 369.4 443.6 371.9 442.7 C374.4 441.8 380.4 435.3 381.9 435.8 C383.4 436.3 387.4 444.5 387.3 447.3 C387.2 450.1 383.1 461.4 381.2 464.2 C379.3 467.0 371.7 473.6 368.8 475 C365.9 476.4 354.8 479.4 351.9 478.4 C349.0 477.3 342.2 467.9 339.6 464.5 C337.0 461.1 326.6 447.5 325.8 444.5 C325.0 441.5 328.8 434.1 331.9 434.2 Z' fill='#b8b8b8' stroke='#4e4e4e' stroke-width='0.9' stroke-linejoin='round' stroke-linecap='round' />
<path d='M341.2 463.5 C344.8 462.7 356.0 458.7 362.7 458.8 C369.4 458.9 378.1 463.3 381.2 464.2' fill='none' stroke='#777' stroke-width='0.8' stroke-linejoin='round' stroke-linecap='round' />
<path d='M359.6 435 C360.5 432.9 362.1 431.2 362.7 433.5 C363.3 435.8 364.0 445.7 363.5 448.8 C363.0 451.9 360.6 452.4 359.6 451.9 C358.6 451.4 357.3 448.6 357.3 445.8 C357.3 443.0 358.7 437.1 359.6 435 Z' fill='#8a8a8a' stroke='#444' stroke-width='0.7' stroke-linejoin='round' stroke-linecap='round' />
<path d='M302.7 404.2 C304.0 403.2 309.3 400.9 311.9 405.8 C314.5 410.7 318.9 430.9 318.1 433.5 C317.3 436.1 309.6 424.8 307.3 421.2 C305.0 417.6 305.0 414.7 304.2 411.9 C303.4 409.1 301.4 405.2 302.7 404.2 Z' fill='#c8c8c8' stroke='#666' stroke-width='0.7' stroke-linejoin='round' stroke-linecap='round' />
<path d='M387.3 430.4 C387.9 428.8 394.4 436.3 396.5 439.6 C398.6 442.9 402.3 450.9 402.7 455 C403.1 459.1 401.2 468.8 399.6 470.4 C398.0 472.0 391.4 469.8 390.4 467.3 C389.4 464.8 392.3 456.8 391.9 451.9 C391.5 447.0 386.7 432.0 387.3 430.4 Z' fill='#c4c4c4' stroke='#555' stroke-width='0.8' stroke-linejoin='round' stroke-linecap='round' />
<path d='M393.5 393.5 C395.3 389.6 403.5 391.4 405.8 395 C408.1 398.6 409.1 411.1 407.3 415 C405.5 418.9 397.3 421.7 395 418.1 C392.7 414.5 391.7 397.4 393.5 393.5 Z' fill='#d6d6d6' stroke='#666' stroke-width='0.7' stroke-linejoin='round' stroke-linecap='round' />
<path d='M406.1 390.4 L411.9 391.9 L413.5 421.2 L415 439.6 L409.6 441.2 L406.5 421.2 Z' fill='#5a5a5a' />
<defs><linearGradient id='thighR' gradientUnits='userSpaceOnUse' x1='455' y1='360' x2='515' y2='360'><stop offset='0' stop-color='#c2c2c2'/><stop offset='0.3' stop-color='#d8d8d8'/><stop offset='0.65' stop-color='#d0d0d0'/><stop offset='1' stop-color='#a4a4a4'/></linearGradient></defs>
<path d='M475 306.9 C476.4 304.8 486.2 313.9 488.8 316.2 C491.4 318.5 495.9 322.8 497.3 326.9 C498.7 331.0 500.2 346.8 501.2 351.5 C502.2 356.2 504.7 363.3 505.8 366.9 C506.9 370.5 509.5 378.7 510.4 382.3 C511.3 385.9 513.3 393.3 513.5 397.7 C513.7 402.1 512.4 414.6 511.9 420 C511.4 425.4 512.4 438.9 508.8 443.8 C505.2 448.7 486.9 462.3 481.2 462.3 C475.5 462.3 462.5 448.7 459.6 443.8 C456.7 438.9 456.9 424.3 456.5 420 C456.1 415.7 456.0 410.6 456.5 406.9 C457.0 403.2 460.1 392.8 461.2 388.5 C462.3 384.2 464.6 374.0 465.8 370 C467.0 366.0 470.7 358.7 471.9 354.6 C473.1 350.5 476.1 340.2 476.5 334.6 C476.9 329.0 473.6 309.0 475 306.9 Z' fill='url(#thighR)' stroke='#5a5a5a' stroke-width='0.9' stroke-linejoin='round' stroke-linecap='round' />
<path d='M482.7 314.6 C484.7 313.4 492.5 324.0 493.5 326.9 C494.5 329.8 491.2 332.5 490.4 336.2 C489.6 339.9 487.5 349.3 487.3 354.6 C487.1 359.9 489.2 370.9 488.8 376.2 C488.4 381.5 486.0 391.1 484.2 394.6 C482.4 398.1 476.8 402.9 475 402.3 C473.2 401.7 471.2 394.3 470.4 390 C469.6 385.7 468.2 375.5 468.8 370 C469.4 364.5 473.7 353.0 475 348.5 C476.3 344.0 477.8 340.7 478.8 336.2 C479.8 331.7 480.7 315.8 482.7 314.6 Z' fill='#dadada' stroke='#707070' stroke-width='0.8' stroke-linejoin='round' stroke-linecap='round' />
<path d='M476.5 334.6 C477.3 334.9 478.9 335.9 481.2 336.2 C483.5 336.5 487.8 336.7 490.4 336.2 C492.9 335.7 495.5 333.6 496.5 333.1' fill='none' stroke='#666' stroke-width='0.8' stroke-linejoin='round' stroke-linecap='round' />
<path d='M493.5 336.2 C493.8 340.0 493.7 351.5 495 359.2 C496.3 366.9 499.9 374.4 501.2 382.3 C502.5 390.2 502.4 402.8 502.7 406.9' fill='none' stroke='#707070' stroke-width='0.8' stroke-linejoin='round' stroke-linecap='round' />
<circle cx='476.5' cy='410.3' r='1.1' fill='#333'/>
<circle cx='481.5' cy='408.8' r='1.1' fill='#333'/>
<circle cx='487.3' cy='407.2' r='1.1' fill='#333'/>
<path d='M462.7 304.6 L478.8 304.2 L475.3 307.8 L464.2 307.8 Z' fill='#555' />
<path d='M433.5 376.2 C437.4 375.8 442.9 379.4 445.8 382.3 C448.7 385.2 453.6 392.7 455 397.7 C456.4 402.7 462.0 417.0 456.5 420 C451.0 423.0 419.6 423.0 413.5 420 C407.4 417.0 410.0 402.3 410.4 397.7 C410.8 393.1 413.4 388.3 416.5 385.4 C419.6 382.5 429.6 376.6 433.5 376.2 Z' fill='#b0b0b0' stroke='#555' stroke-width='0.8' stroke-linejoin='round' stroke-linecap='round' />
<path d='M431.9 379.2 C433.2 377.7 438.9 379.5 441.2 382.3 C443.5 385.1 446.1 393.1 445.8 396.2 C445.5 399.3 441.7 401.6 439.6 400.8 C437.6 400.0 434.8 395.1 433.5 391.5 C432.2 387.9 430.6 380.7 431.9 379.2 Z' fill='#cfcfcf' stroke='#555' stroke-width='0.8' stroke-linejoin='round' stroke-linecap='round' />
<path d='M415 390 C416.0 385.9 423.2 385.7 425.8 388.5 C428.4 391.3 431.4 402.8 430.4 406.9 C429.4 411.0 422.2 415.9 419.6 413.1 C417.0 410.3 414.0 394.1 415 390 Z' fill='#c4c4c4' stroke='#555' stroke-width='0.7' stroke-linejoin='round' stroke-linecap='round' />
<path d='M453.5 410 C456.0 406.4 474.9 407.8 478.1 410 C481.3 412.2 481.6 424.4 481.2 428.5 C480.8 432.6 476.8 442.7 475 445.4 C473.2 448.1 468.0 452.0 465.8 451.5 C463.6 451.0 457.9 445.6 456.5 440.8 C455.1 436.0 451.0 413.6 453.5 410 Z' fill='#b6b6b6' stroke='#555' stroke-width='0.8' stroke-linejoin='round' stroke-linecap='round' />
<path d='M478.8 423.8 C479.1 422.0 485.1 420.7 485.8 422.3 C486.5 423.9 489.1 446.7 488.8 448.5 C488.5 450.3 482.6 451.6 481.9 450 C481.2 448.4 478.5 425.6 478.8 423.8 Z' fill='#d2d2d2' stroke='#555' stroke-width='0.8' stroke-linejoin='round' stroke-linecap='round' />
<path d='M491.9 422.3 C492.2 420.5 498.9 419.3 499.6 420.8 C500.3 422.3 503.0 443.6 502.7 445.4 C502.4 447.2 495.7 449.2 495 447.7 C494.3 446.2 491.6 424.1 491.9 422.3 Z' fill='#d2d2d2' stroke='#555' stroke-width='0.8' stroke-linejoin='round' stroke-linecap='round' />
<path d='M487.3 425.4 L491.9 424.6 L494.2 446.2 L489.2 447.7 Z' fill='#8a8a8a' />
<path d='M467.3 450 C468.4 449.3 478.0 451.5 481.2 451.5 C484.4 451.5 491.4 451.2 495 450 C498.6 448.8 509.4 441.3 511.9 440.8 C514.4 440.3 516.5 444.6 516.5 445.7 C516.5 446.8 514.6 448.4 511.9 450.3 C509.2 452.2 497.1 460.9 493.5 462.3 C489.9 463.7 483.7 462.8 481.2 462.3 C478.7 461.8 473.5 459.1 471.9 457.7 C470.3 456.3 466.2 450.7 467.3 450 Z' fill='#c4c4c4' stroke='#4e4e4e' stroke-width='0.9' stroke-linejoin='round' stroke-linecap='round' />
<path d='M410.4 462.3 C411.4 458.8 418.6 456.0 422.7 454.6 C426.8 453.2 436.7 451.3 441.2 451.5 C445.7 451.7 453.4 453.5 456.5 456.2 C459.6 458.9 463.4 467.0 464.2 471.5 C465.0 476.0 463.7 485.5 462.7 490 C461.7 494.5 458.8 502.9 456.5 505.4 C454.2 507.9 449.1 508.9 445.8 508.5 C442.5 508.1 435.2 503.9 431.9 502.3 C428.6 500.7 423.5 499.1 421.2 496.2 C418.9 493.3 416.4 485.3 415 480.8 C413.6 476.3 409.4 465.8 410.4 462.3 Z' fill='#cccccc' stroke='#555' stroke-width='0.9' stroke-linejoin='round' stroke-linecap='round' />
<path d='M425.8 474.6 C428.4 475.1 435.3 477.9 441.2 477.7 C447.1 477.4 457.9 473.9 461.2 473.1' fill='none' stroke='#707070' stroke-width='0.8' stroke-linejoin='round' stroke-linecap='round' />
<path d='M430.4 493.1 C432.7 493.6 439.3 496.5 444.2 496.2 C449.1 495.9 457.0 492.3 459.6 491.5' fill='none' stroke='#707070' stroke-width='0.8' stroke-linejoin='round' stroke-linecap='round' />
<path d='M439.6 456.2 C439.4 459.8 437.8 469.5 438.1 477.7 C438.4 485.9 440.7 500.8 441.2 505.4' fill='none' stroke='#777' stroke-width='0.8' stroke-linejoin='round' stroke-linecap='round' />
<path d='M425.8 490 C427.7 488.9 441.1 493.8 445.8 493.8 C450.5 493.8 459.8 488.5 461.2 490 C462.6 491.5 458.6 502.9 456.5 505.4 C454.4 507.9 449.1 508.9 445.8 508.5 C442.5 508.1 434.6 504.8 431.9 502.3 C429.2 499.8 423.9 491.1 425.8 490 Z' fill='#b4b4b4' stroke='#606060' stroke-width='0.7' stroke-linejoin='round' stroke-linecap='round' />
<circle cx='441.9' cy='456.9' r='2.6' fill='#c0c0c0' stroke='#666' stroke-width='.7'/>
<path d='M448.8 462.3 C448.8 460.4 453.0 457.9 456.5 460 C460.0 462.1 471.7 472.9 475 477.7 C478.3 482.5 480.1 490.9 481.2 496.2 C482.3 501.5 483.7 513.7 483.5 517.7 C483.3 521.7 480.6 525.4 479.6 526.2 C478.6 527.0 476.6 526.2 475.8 523.8 C475.0 521.4 474.6 513.0 473.5 508.5 C472.4 504.0 469.6 494.5 467.3 490 C465.0 485.5 459.0 478.3 456.5 474.6 C454.0 470.9 448.8 464.2 448.8 462.3 Z' fill='#d0d0d0' stroke='#555' stroke-width='0.8' stroke-linejoin='round' stroke-linecap='round' />
<path d='M425.8 508.5 C425.8 506.4 429.6 506.9 431.9 506.9 C434.2 506.9 441.3 506.2 442.7 508.5 C444.1 510.8 443.3 521.3 442.7 523.8 C442.1 526.3 439.5 527.1 438.1 526.9 C436.7 526.7 433.5 524.8 431.9 522.3 C430.3 519.8 425.8 510.6 425.8 508.5 Z' fill='#b8b8b8' stroke='#555' stroke-width='0.8' stroke-linejoin='round' stroke-linecap='round' />
<path d='M407.3 456.2 C407.7 456.0 412.1 457.3 413.5 460.8 C414.9 464.3 416.7 476.8 418.1 482.3 C419.5 487.8 423.8 500.4 424.2 502.3 C424.6 504.2 422.4 499.1 421.2 496.2 C420.0 493.3 416.4 485.3 415 480.8 C413.6 476.3 411.4 465.6 410.4 462.3 C409.4 459.0 406.9 456.4 407.3 456.2 Z' fill='#dcdcdc' stroke='#666' stroke-width='0.7' stroke-linejoin='round' stroke-linecap='round' />
<path d='M410.4 419.2 C412.3 415.9 421.7 415.0 425.8 416.2 C429.9 417.4 437.9 424.8 441.2 428.5 C444.5 432.2 450.4 440.7 450.4 443.8 C450.4 446.9 444.9 450.1 441.2 451.5 C437.5 452.9 426.6 456.0 422.7 454.6 C418.8 453.2 413.5 445.5 411.9 440.8 C410.3 436.1 408.5 422.5 410.4 419.2 Z' fill='#bababa' stroke='#555' stroke-width='0.8' stroke-linejoin='round' stroke-linecap='round' />
<path d='M415 422.3 C417.6 424.6 425.3 431.8 430.4 436.2 C435.5 440.6 443.2 446.4 445.8 448.5' fill='none' stroke='#4e4e4e' stroke-width='1' stroke-linejoin='round' stroke-linecap='round' />
<path d='M419.6 417.7 C422.4 420.3 431.6 428.5 436.5 433.1 C441.4 437.7 446.8 443.3 448.8 445.4' fill='none' stroke='#666' stroke-width='0.8' stroke-linejoin='round' stroke-linecap='round' />
<path d='M354.1 482 C355.3 479.4 362.7 476.0 366.2 476 C369.7 476.0 379.8 481.8 384.2 482 C388.6 482.2 401.5 475.7 404.3 478 C407.1 480.3 409.5 498.1 408.3 502.1 C407.1 506.1 397.9 510.8 394.2 512.1 C390.5 513.4 380.4 513.3 376.2 513.1 C372.0 512.9 360.4 511.9 358.1 510.1 C355.8 508.4 356.6 501.4 356.1 498.1 C355.6 494.8 352.9 484.6 354.1 482 Z' fill='#cdcdcd' stroke='#555' stroke-width='0.9' stroke-linejoin='round' stroke-linecap='round' />
<path d='M370.2 478 C373.4 476.7 391.4 474.7 394.2 476 C397.0 477.3 393.3 486.0 391.2 488 C389.1 490.0 381.0 491.4 378.2 491.1 C375.4 490.8 371.3 487.7 370.2 486 C369.1 484.3 367.0 479.3 370.2 478 Z' fill='#8e8e8e' stroke='#4e4e4e' stroke-width='0.8' stroke-linejoin='round' stroke-linecap='round' />
<path d='M360.2 488 C361.5 487.5 367.0 494.5 370.2 496.1 C373.4 497.7 380.5 500.6 384.2 500.1 C387.9 499.6 396.1 491.8 398.2 492.1 C400.3 492.4 401.6 499.7 400.3 502.1 C399.0 504.5 391.9 509.2 388.2 510.1 C384.5 511.0 375.9 510.4 372.2 509.1 C368.5 507.8 361.8 502.9 360.2 500.1 C358.6 497.3 358.9 488.5 360.2 488 Z' fill='#dadada' stroke='#606060' stroke-width='0.8' stroke-linejoin='round' stroke-linecap='round' />
<path d='M358.1 510.1 C361.6 508.9 371.4 512.8 376.2 513.1 C381.0 513.4 390.5 513.0 394.2 512.1 C397.9 511.2 402.2 505.3 404.3 506.1 C406.4 506.9 409.2 514.1 410.3 518.1 C411.4 522.1 412.4 531.9 412.3 536.2 C412.2 540.5 409.0 547.0 409.3 550.2 C409.6 553.4 413.9 557.0 414.3 560.2 C414.7 563.4 414.2 571.4 412.3 574.3 C410.4 577.2 403.2 580.2 400.3 582.3 C397.4 584.4 393.4 589.0 390.2 590.3 C387.0 591.6 380.2 593.4 376.2 592.3 C372.2 591.2 363.7 586.3 360.2 582.3 C356.7 578.3 351.7 568.1 350.1 562.2 C348.5 556.3 348.1 543.5 348.1 538.2 C348.1 532.9 348.8 525.8 350.1 522.1 C351.4 518.4 354.6 511.3 358.1 510.1 Z' fill='#cccccc' stroke='#555' stroke-width='0.9' stroke-linejoin='round' stroke-linecap='round' />
<circle cx='379.8' cy='530.2' r='4.2' fill='#c4c4c4' stroke='#606060' stroke-width='.8'/>
<circle cx='379.8' cy='530.2' r='2.4' fill='#d4d4d4' stroke='#707070' stroke-width='.7'/>
<path d='M366.2 520.1 C371.6 517.7 388.5 517.7 394.2 520.1 C399.9 522.5 403.4 530.8 404.3 536.2 C405.2 541.6 404.5 552.0 400.3 556.2 C396.1 560.4 382.2 564.2 376.2 564.2 C370.2 564.2 362.9 560.4 360.2 556.2 C357.5 552.0 357.2 541.6 358.1 536.2 C359.0 530.8 360.8 522.5 366.2 520.1 Z' fill='#d4d4d4' stroke='#666' stroke-width='0.8' stroke-linejoin='round' stroke-linecap='round' />
<path d='M360.2 558.2 C362.9 559.5 369.5 566.2 376.2 566.2 C382.9 566.2 396.3 559.5 400.3 558.2' fill='none' stroke='#666' stroke-width='0.8' stroke-linejoin='round' stroke-linecap='round' />
<path d='M362.2 570.3 C364.9 571.8 371.8 579.1 378.2 579.3 C384.6 579.5 396.6 572.6 400.3 571.3' fill='none' stroke='#666' stroke-width='0.8' stroke-linejoin='round' stroke-linecap='round' />
<path d='M368.2 582.3 C368.2 581.4 373.3 585.2 376.2 585.3 C379.1 585.4 387.0 584.5 390.2 583.3 C393.4 582.1 399.2 575.9 400.3 576.3 C401.4 576.7 400.3 584.0 398.2 586.3 C396.1 588.6 387.1 592.5 384.2 593.3 C381.3 594.1 378.3 593.8 376.2 592.3 C374.1 590.8 368.2 583.2 368.2 582.3 Z' fill='#b2b2b2' stroke='#555' stroke-width='0.7' stroke-linejoin='round' stroke-linecap='round' />
<path d='M362.2 538.2 C365.0 535.8 374.4 538.1 375.2 540.2 C376.0 542.3 370.2 551.0 368.2 554.2 C366.2 557.4 362.1 563.7 360.2 564.2 C358.3 564.7 353.8 561.7 354.1 558.2 C354.4 554.7 359.4 540.6 362.2 538.2 Z' fill='#bcbcbc' stroke='#555' stroke-width='0.8' stroke-linejoin='round' stroke-linecap='round' />
<path d='M332.1 538.2 C333.7 535.8 336.5 534.1 338.1 536.2 C339.7 538.3 344.2 550.2 344.1 554.2 C344.0 558.2 339.0 563.5 337.1 566.2 C335.2 568.9 331.7 574.3 330.1 574.3 C328.5 574.3 325.6 568.9 325.1 566.2 C324.6 563.5 325.2 557.9 326.1 554.2 C327.0 550.5 330.5 540.6 332.1 538.2 Z' fill='#d4d4d4' stroke='#555' stroke-width='0.8' stroke-linejoin='round' stroke-linecap='round' />
<path d='M346.1 570.3 C347.2 567.4 350.2 564.6 352.1 566.2 C354.0 567.8 359.1 578.3 360.2 582.3 C361.3 586.3 359.7 592.0 360.2 596.3 C360.7 600.6 363.0 610.4 364.2 614.4 C365.4 618.4 369.2 624.3 369.2 626.4 C369.2 628.5 365.9 630.9 364.2 630.4 C362.5 629.9 358.2 625.6 356.1 622.4 C354.0 619.2 349.7 610.8 348.1 606.3 C346.5 601.8 344.4 593.1 344.1 588.3 C343.8 583.5 345.0 573.2 346.1 570.3 Z' fill='#cfcfcf' stroke='#555' stroke-width='0.8' stroke-linejoin='round' stroke-linecap='round' />
<path d='M350.1 590.3 L358.1 598.3' fill='none' stroke='#555' stroke-width='0.8' stroke-linejoin='round' stroke-linecap='round' />
<path d='M400.3 558.2 C401.0 555.0 407.4 549.9 409.3 550.2 C411.2 550.5 413.4 557.0 414.3 560.2 C415.2 563.4 416.3 570.6 416.3 574.3 C416.3 578.0 415.6 584.6 414.3 588.3 C413.0 592.0 408.7 599.6 406.3 602.3 C403.9 605.0 397.9 608.2 396.2 608.3 C394.5 608.4 392.4 605.7 393.2 603.3 C394.0 600.9 400.8 594.2 402.3 590.3 C403.8 586.4 404.6 578.6 404.3 574.3 C404.0 570.0 399.6 561.4 400.3 558.2 Z' fill='#d4d4d4' stroke='#555' stroke-width='0.8' stroke-linejoin='round' stroke-linecap='round' />
<path d='M338.1 536.2 C338.9 531.9 348.8 521.8 350.1 522.1 C351.4 522.4 348.1 532.9 348.1 538.2 C348.1 543.5 350.6 560.1 350.1 562.2 C349.6 564.3 345.7 557.7 344.1 554.2 C342.5 550.7 337.3 540.5 338.1 536.2 Z' fill='#b4b4b4' stroke='#555' stroke-width='0.7' stroke-linejoin='round' stroke-linecap='round' />
</g>
</svg>
<div style='left:9px;top:51px;width:1px;height:611px;background:#5a5a5a;'></div>
<div class='a' style='left:828px;top:57px;width:203px;height:606px;border:1px solid #fff;box-sizing:border-box;'></div>
<div class='a' style='left:827px;top:56px;width:203px;height:606px;border:1px solid #a0a0a0;box-sizing:border-box;'></div>
<div class='a' style='left:833px;top:66px;width:147px;height:56px;border:1px solid #fff;box-sizing:border-box;'></div><div class='a' style='left:832px;top:65px;width:147px;height:56px;border:1px solid #a0a0a0;box-sizing:border-box;'></div><div class='a' style='left:838.5px;top:63px;width:65.5px;height:6px;background:#f0f0f0;'></div><span class='t ' style='left:840.5px;top:59.64px;font-size:11px;line-height:12.64px;color:#000;letter-spacing:-0.358px;'>Map Channel</span>
<div class='a' style='left:847px;top:86px;width:99px;height:20px;background:#f0f0f0;box-sizing:border-box;border:1px solid;border-color:#a0a0a0 #fff #fff #a0a0a0;'><div style='position:absolute;left:0;top:0;right:0;bottom:0;box-sizing:border-box;border:1px solid;border-color:#696969 #e3e3e3 #e3e3e3 #696969'></div></div><span class='t ' style='left:851.5px;top:90.05px;font-size:11px;line-height:12.64px;color:#8a8a8a;letter-spacing:0.000px;'>0</span><div class='a' style='left:948px;top:86px;width:17px;height:10px;background:#f0f0f0;box-sizing:border-box;border:1px solid;border-color:#e3e3e3 #696969 #696969 #e3e3e3;'><div style='position:absolute;left:0;top:0;right:0;bottom:0;box-sizing:border-box;border:1px solid;border-color:#fff #a0a0a0 #a0a0a0 #fff'></div><svg style='left:0;top:0' width='17' height='10'><path d='M5.5 5.5 l2 -2 l2 2z' fill='#9a9a9a'/></svg></div><div class='a' style='left:948px;top:96px;width:17px;height:10px;background:#f0f0f0;box-sizing:border-box;border:1px solid;border-color:#e3e3e3 #696969 #696969 #e3e3e3;'><div style='position:absolute;left:0;top:0;right:0;bottom:0;box-sizing:border-box;border:1px solid;border-color:#fff #a0a0a0 #a0a0a0 #fff'></div><svg style='left:0;top:0' width='17' height='10'><path d='M5.5 3.5 l2 2 l2 -2z' fill='#9a9a9a'/></svg></div>
<div class='a' style='left:833px;top:129px;width:159px;height:279px;border:1px solid #fff;box-sizing:border-box;'></div><div class='a' style='left:832px;top:128px;width:159px;height:279px;border:1px solid #a0a0a0;box-sizing:border-box;'></div><div class='a' style='left:838.7px;top:126px;width:72.5px;height:6px;background:#f0f0f0;'></div><span class='t ' style='left:840.7px;top:122.64px;font-size:11px;line-height:12.64px;color:#000;letter-spacing:-0.234px;'>Scene Objects</span>
<div class='a' style='left:837px;top:139px;width:149px;height:199px;background:#fff;box-sizing:border-box;border:1px solid;border-color:#a0a0a0 #fff #fff #a0a0a0;'><div style='position:absolute;left:0;top:0;right:0;bottom:0;box-sizing:border-box;border:1px solid;border-color:#696969 #e3e3e3 #e3e3e3 #696969'></div></div>
<div style='left:839px;top:141px;width:129px;height:180px;overflow:hidden;background:#fff;'><span class='t ' style='left:1.7px;top:0.85px;font-size:11px;line-height:12.64px;color:#000;letter-spacing:0.000px;letter-spacing:-0.26px;'>rl7_LLeg_rubberShape</span><span class='t ' style='left:1.7px;top:13.85px;font-size:11px;line-height:12.64px;color:#000;letter-spacing:0.000px;letter-spacing:-0.26px;'>rl7_RLeg_rubberShape</span><span class='t ' style='left:1.7px;top:26.84px;font-size:11px;line-height:12.64px;color:#000;letter-spacing:0.000px;letter-spacing:-0.26px;'>rl7_LLeg_skinnedKneeShape</span><span class='t ' style='left:1.7px;top:39.84px;font-size:11px;line-height:12.64px;color:#000;letter-spacing:0.000px;letter-spacing:-0.26px;'>rl7_RLeg_skinnedKneeShape</span><span class='t ' style='left:1.7px;top:52.84px;font-size:11px;line-height:12.64px;color:#000;letter-spacing:0.000px;letter-spacing:-0.26px;'>rl7_LArm_skinnedShoulderShape</span><span class='t ' style='left:1.7px;top:65.84px;font-size:11px;line-height:12.64px;color:#000;letter-spacing:0.000px;letter-spacing:-0.26px;'>rl7_RArm_skinnedShoulderShape</span><span class='t ' style='left:1.7px;top:78.84px;font-size:11px;line-height:12.64px;color:#000;letter-spacing:0.000px;letter-spacing:-0.26px;'>rl7_spineLowerShape</span><span class='t ' style='left:1.7px;top:91.84px;font-size:11px;line-height:12.64px;color:#000;letter-spacing:0.000px;letter-spacing:-0.26px;'>rl7_spineHighShape</span><span class='t ' style='left:1.7px;top:104.84px;font-size:11px;line-height:12.64px;color:#000;letter-spacing:0.000px;letter-spacing:-0.26px;'>headPartShape1</span><span class='t ' style='left:1.7px;top:117.84px;font-size:11px;line-height:12.64px;color:#000;letter-spacing:0.000px;letter-spacing:-0.26px;'>headPartShape2</span><span class='t ' style='left:1.7px;top:130.84px;font-size:11px;line-height:12.64px;color:#000;letter-spacing:0.000px;letter-spacing:-0.26px;'>headPartShape3</span><span class='t ' style='left:1.7px;top:143.84px;font-size:11px;line-height:12.64px;color:#000;letter-spacing:0.000px;letter-spacing:-0.26px;'>headPartShape4</span><span class='t ' style='left:1.7px;top:156.84px;font-size:11px;line-height:12.64px;color:#000;letter-spacing:0.000px;letter-spacing:-0.26px;'>headPartShape5</span><span class='t ' style='left:1.7px;top:169.84px;font-size:11px;line-height:12.64px;color:#000;letter-spacing:0.000px;letter-spacing:-0.26px;'>headPartShape6</span></div>
<div style='left:968px;top:141px;width:16px;height:180px;background:#f0f0f0;'><svg style='left:0;top:0' width='16' height='180'><path d='M4.5 11.5 L8 8 L11.5 11.5z' fill='#505050'/><path d='M4.5 168 L8 171.5 L11.5 168z' fill='#505050'/></svg><div style='left:0;top:18px;width:16px;height:15px;box-sizing:border-box;border:1px solid #979797;border-radius:2px;background:linear-gradient(90deg,#f4f4f4 0,#ececec 45%,#d9d9d9 55%,#cfcfcf 100%);box-shadow:inset 0 0 0 1px #fff;'></div></div>
<div style='left:839px;top:321px;width:129px;height:15px;background:#f0f0f0;'><svg style='left:0;top:0' width='129' height='15'><path d='M11 4 L7.5 7.5 L11 11z' fill='#404040'/><path d='M119 4 L122.5 7.5 L119 11z' fill='#404040'/><g stroke='#505050' stroke-width='1'><path d='M52.5 5v6M54.5 5v6M56.5 5v6'/></g></svg><div style='left:18px;top:0;width:73px;height:15px;box-sizing:border-box;border:1px solid #979797;border-radius:2px;background:linear-gradient(180deg,#f4f4f4 0,#ececec 45%,#d9d9d9 55%,#cfcfcf 100%);box-shadow:inset 0 0 0 1px #fff;'></div><svg style='left:0;top:0' width='129' height='15'><g stroke='#505050' stroke-width='1'><path d='M51.5 4.5v6M53.5 4.5v6M55.5 4.5v6'/></g></svg></div>
<div class='a' style='left:968px;top:321px;width:16px;height:15px;background:#f0f0f0;'></div>
<div class='a' style='left:838px;top:346px;width:135px;height:28px;border:1px solid #fff;box-sizing:border-box;'></div><div class='a' style='left:837px;top:345px;width:135px;height:28px;border:1px solid #a0a0a0;box-sizing:border-box;'></div><div class='a' style='left:843.7px;top:343px;width:75.5px;height:6px;background:#f0f0f0;'></div><span class='t ' style='left:845.7px;top:339.85px;font-size:11px;line-height:12.64px;color:#000;letter-spacing:-0.309px;'>Selection Mode</span>
<svg style='left:841.5px;top:354.5px' width='14' height='14' viewBox='0 0 14 14'><circle cx='7' cy='7' r='5.5' fill='#fff'/><path d='M2.6 11.4 A6 6 0 0 1 11.4 2.6' fill='none' stroke='#a0a0a0' stroke-width='1'/><path d='M3.4 10.6 A5 5 0 0 1 10.6 3.4' fill='none' stroke='#696969' stroke-width='1'/><path d='M11.4 2.6 A6 6 0 0 1 2.6 11.4' fill='none' stroke='#fff' stroke-width='1'/><path d='M10.6 3.4 A5 5 0 0 1 3.4 10.6' fill='none' stroke='#e3e3e3' stroke-width='1'/><circle cx='7' cy='7' r='2' fill='#000'/></svg>
<span class='t ' style='left:859.2px;top:356.65px;font-size:11px;line-height:12.64px;color:#000;letter-spacing:-0.043px;'>By Object</span>
<svg style='left:907.5px;top:354.5px' width='14' height='14' viewBox='0 0 14 14'><circle cx='7' cy='7' r='5.5' fill='#fff'/><path d='M2.6 11.4 A6 6 0 0 1 11.4 2.6' fill='none' stroke='#a0a0a0' stroke-width='1'/><path d='M3.4 10.6 A5 5 0 0 1 10.6 3.4' fill='none' stroke='#696969' stroke-width='1'/><path d='M11.4 2.6 A6 6 0 0 1 2.6 11.4' fill='none' stroke='#fff' stroke-width='1'/><path d='M10.6 3.4 A5 5 0 0 1 3.4 10.6' fill='none' stroke='#e3e3e3' stroke-width='1'/></svg>
<span class='t ' style='left:925px;top:356.65px;font-size:11px;line-height:12.64px;color:#000;letter-spacing:-0.202px;'>By Voxel</span>
<div class='a' style='left:837px;top:374px;width:30px;height:30px;background:#00ff00;box-sizing:border-box;border:1px solid;border-color:#e3e3e3 #696969 #696969 #e3e3e3;'><div style='position:absolute;left:0;top:0;right:0;bottom:0;box-sizing:border-box;border:1px solid;border-color:#fff #a0a0a0 #a0a0a0 #fff'></div></div>
<div class='a' style='left:833px;top:417px;width:160px;height:121px;border:1px solid #fff;box-sizing:border-box;'></div><div class='a' style='left:832px;top:416px;width:160px;height:121px;border:1px solid #a0a0a0;box-sizing:border-box;'></div><div class='a' style='left:839px;top:414px;width:67.3px;height:6px;background:#f0f0f0;'></div><span class='t ' style='left:841px;top:410.35px;font-size:11px;line-height:12.64px;color:#000;letter-spacing:-0.482px;'>Alembic mesh</span>
<div class='a' style='left:837px;top:426px;width:13px;height:13px;background:#f0f0f0;box-sizing:border-box;border:1px solid;border-color:#a0a0a0 #fff #fff #a0a0a0;'><div style='position:absolute;left:0;top:0;right:0;bottom:0;box-sizing:border-box;border:1px solid;border-color:#696969 #e3e3e3 #e3e3e3 #696969'></div></div>
<span class='t dis' style='left:854.8px;top:426.65px;font-size:11px;line-height:12.64px;color:#a0a0a0;letter-spacing:-0.323px;'>Subdivide all meshes</span>
<div class='a' style='left:838px;top:449px;width:121px;height:26px;border:1px solid #fff;box-sizing:border-box;'></div>
<div class='a' style='left:837px;top:448px;width:121px;height:26px;border:1px solid #a0a0a0;box-sizing:border-box;'></div>
<span class='t ' style='left:841.6px;top:452.05px;font-size:11px;line-height:12.64px;color:#000;letter-spacing:-0.219px;'>Subdiv level</span>
<div class='a' style='left:904px;top:451px;width:31px;height:19px;background:#f0f0f0;box-sizing:border-box;border:1px solid;border-color:#a0a0a0 #fff #fff #a0a0a0;'><div style='position:absolute;left:0;top:0;right:0;bottom:0;box-sizing:border-box;border:1px solid;border-color:#696969 #e3e3e3 #e3e3e3 #696969'></div></div><span class='t ' style='left:909.5px;top:455.55px;font-size:11px;line-height:12.64px;color:#8a8a8a;letter-spacing:0.000px;'>1</span><div class='a' style='left:937px;top:451px;width:18px;height:9px;background:#f0f0f0;box-sizing:border-box;border:1px solid;border-color:#e3e3e3 #696969 #696969 #e3e3e3;'><div style='position:absolute;left:0;top:0;right:0;bottom:0;box-sizing:border-box;border:1px solid;border-color:#fff #a0a0a0 #a0a0a0 #fff'></div><svg style='left:0;top:0' width='18' height='9'><path d='M6 5 l2 -2 l2 2z' fill='#9a9a9a'/></svg></div><div class='a' style='left:937px;top:460px;width:18px;height:10px;background:#f0f0f0;box-sizing:border-box;border:1px solid;border-color:#e3e3e3 #696969 #696969 #e3e3e3;'><div style='position:absolute;left:0;top:0;right:0;bottom:0;box-sizing:border-box;border:1px solid;border-color:#fff #a0a0a0 #a0a0a0 #fff'></div><svg style='left:0;top:0' width='18' height='10'><path d='M6 3.5 l2 2 l2 -2z' fill='#9a9a9a'/></svg></div>
<div class='a' style='left:837px;top:479px;width:13px;height:13px;background:#f0f0f0;box-sizing:border-box;border:1px solid;border-color:#a0a0a0 #fff #fff #a0a0a0;'><div style='position:absolute;left:0;top:0;right:0;bottom:0;box-sizing:border-box;border:1px solid;border-color:#696969 #e3e3e3 #e3e3e3 #696969'></div></div>
<span class='t dis' style='left:854.8px;top:479.85px;font-size:11px;line-height:12.64px;color:#a0a0a0;letter-spacing:-0.071px;'>Preserve geometry borders</span>
<div class='a' style='left:837px;top:495px;width:13px;height:13px;background:#f0f0f0;box-sizing:border-box;border:1px solid;border-color:#a0a0a0 #fff #fff #a0a0a0;'><div style='position:absolute;left:0;top:0;right:0;bottom:0;box-sizing:border-box;border:1px solid;border-color:#696969 #e3e3e3 #e3e3e3 #696969'></div></div>
<span class='t dis' style='left:854.8px;top:495.65px;font-size:11px;line-height:12.64px;color:#a0a0a0;letter-spacing:-0.427px;'>Subdivide UVs</span>
<div class='a' style='left:837px;top:511px;width:76px;height:23px;background:#f0f0f0;box-sizing:border-box;border:1px solid;border-color:#e3e3e3 #696969 #696969 #e3e3e3;'><div style='position:absolute;left:0;top:0;right:0;bottom:0;box-sizing:border-box;border:1px solid;border-color:#fff #a0a0a0 #a0a0a0 #fff'></div></div>
<span class='t dis' style='left:860.8px;top:516.04px;font-size:11px;line-height:12.64px;color:#a0a0a0;letter-spacing:-0.266px;'>Apply</span>
<div class='a' style='left:833px;top:546px;width:109px;height:60px;border:1px solid #fff;box-sizing:border-box;'></div><div class='a' style='left:832px;top:545px;width:109px;height:60px;border:1px solid #a0a0a0;box-sizing:border-box;'></div><div class='a' style='left:838.6px;top:543px;width:64.7px;height:6px;background:#f0f0f0;'></div><span class='t ' style='left:840.6px;top:539.84px;font-size:11px;line-height:12.64px;color:#000;letter-spacing:-0.293px;'>Particles size</span>
<span class='t ' style='left:841.6px;top:557.04px;font-size:11px;line-height:12.64px;color:#000;letter-spacing:0.000px;'>1</span>
<span class='t ' style='left:884.5px;top:557.04px;font-size:11px;line-height:12.64px;color:#000;letter-spacing:0.000px;'>1</span>
<span class='t ' style='left:925.5px;top:557.04px;font-size:11px;line-height:12.64px;color:#000;letter-spacing:-0.825px;'>20</span>
<div class='a' style='left:837px;top:577px;width:101px;height:24px;border:1px dotted #000;box-sizing:border-box;'></div>
<div class='a' style='left:851px;top:586px;width:77px;height:4px;box-sizing:border-box;border:1px solid;border-color:#a0a0a0 #fff #fff #a0a0a0;background:#e3e3e3;'><div style='left:0;top:0;right:0;height:1px;background:#696969'></div></div>
<svg style='left:845.5px;top:580px' width='11' height='21' viewBox='0 0 11 21'><path d='M0.5 0.5 H10.5 V15.5 L5.5 20.5 L0.5 15.5 Z' fill='#f0f0f0'/><path d='M0.5 15.5 V0.5 H9.5' fill='none' stroke='#fff'/><path d='M10.5 0.5 V15.5 L5.5 20.5' fill='none' stroke='#696969'/><path d='M9.5 1.5 V15 L5.5 19.2' fill='none' stroke='#a0a0a0'/><path d='M0.5 15.5 L5.5 20.5' fill='none' stroke='#e3e3e3'/></svg>
<div class='a' style='left:9px;top:671px;width:1023px;height:146px;border:1px solid #fff;box-sizing:border-box;'></div>
<div class='a' style='left:8px;top:670px;width:1023px;height:146px;border:1px solid #a0a0a0;box-sizing:border-box;'></div>
<div class='a' style='left:14px;top:681px;width:829px;height:87px;border:1px solid #fff;box-sizing:border-box;'></div><div class='a' style='left:13px;top:680px;width:829px;height:87px;border:1px solid #a0a0a0;box-sizing:border-box;'></div><div class='a' style='left:20px;top:678px;width:50px;height:6px;background:#f0f0f0;'></div><span class='t ' style='left:22px;top:674.04px;font-size:11px;line-height:12.64px;color:#000;letter-spacing:-0.325px;'>Animation</span>
<span class='t ' style='left:30.8px;top:701.04px;font-size:11px;line-height:12.64px;color:#000;letter-spacing:0.000px;'>0</span>
<span class='t ' style='left:424.5px;top:701.04px;font-size:11px;line-height:12.64px;color:#000;letter-spacing:0.000px;'>0</span>
<span class='t ' style='left:816px;top:701.04px;font-size:11px;line-height:12.64px;color:#000;letter-spacing:-0.125px;'>38</span>
<div class='a' style='left:41px;top:731px;width:779px;height:4px;box-sizing:border-box;border:1px solid;border-color:#a0a0a0 #fff #fff #a0a0a0;background:#e3e3e3;'><div style='left:0;top:0;right:0;height:1px;background:#696969'></div></div>
<svg style='left:36.5px;top:723px' width='11' height='21' viewBox='0 0 11 21'><path d='M0.5 0.5 H10.5 V15.5 L5.5 20.5 L0.5 15.5 Z' fill='#f0f0f0'/><path d='M0.5 15.5 V0.5 H9.5' fill='none' stroke='#fff'/><path d='M10.5 0.5 V15.5 L5.5 20.5' fill='none' stroke='#696969'/><path d='M9.5 1.5 V15 L5.5 19.2' fill='none' stroke='#a0a0a0'/><path d='M0.5 15.5 L5.5 20.5' fill='none' stroke='#e3e3e3'/></svg>
<svg style='left:0;top:740px' width='1040' height='14'><g stroke='#000' stroke-width='1'><path d='M41.5 6 V11'/><path d='M61.5 6 V10'/><path d='M82.5 6 V10'/><path d='M102.5 6 V10'/><path d='M122.5 6 V10'/><path d='M143.5 6 V10'/><path d='M163.5 6 V10'/><path d='M183.5 6 V10'/><path d='M204.5 6 V10'/><path d='M224.5 6 V10'/><path d='M244.5 6 V10'/><path d='M265.5 6 V10'/><path d='M285.5 6 V10'/><path d='M305.5 6 V10'/><path d='M326.5 6 V10'/><path d='M346.5 6 V10'/><path d='M366.5 6 V10'/><path d='M387.5 6 V10'/><path d='M407.5 6 V10'/><path d='M428.5 6 V10'/><path d='M448.5 6 V10'/><path d='M468.5 6 V10'/><path d='M489.5 6 V10'/><path d='M509.5 6 V10'/><path d='M529.5 6 V10'/><path d='M550.5 6 V10'/><path d='M570.5 6 V10'/><path d='M590.5 6 V10'/><path d='M611.5 6 V10'/><path d='M631.5 6 V10'/><path d='M651.5 6 V10'/><path d='M672.5 6 V10'/><path d='M692.5 6 V10'/><path d='M712.5 6 V10'/><path d='M733.5 6 V10'/><path d='M753.5 6 V10'/><path d='M773.5 6 V10'/><path d='M794.5 6 V10'/><path d='M814.5 6 V11'/></g></svg>
<div class='a' style='left:845px;top:681px;width:108px;height:35px;border:1px solid #fff;box-sizing:border-box;'></div><div class='a' style='left:844px;top:680px;width:108px;height:35px;border:1px solid #a0a0a0;box-sizing:border-box;'></div><div class='a' style='left:849.5px;top:678px;width:61px;height:6px;background:#f0f0f0;'></div><span class='t ' style='left:851.5px;top:674.04px;font-size:11px;line-height:12.64px;color:#000;letter-spacing:-0.043px;'>Enter frame</span>
<div class='a' style='left:848px;top:691px;width:99px;height:19px;background:#fff;box-sizing:border-box;border:1px solid;border-color:#a0a0a0 #fff #fff #a0a0a0;'><div style='position:absolute;left:0;top:0;right:0;bottom:0;box-sizing:border-box;border:1px solid;border-color:#696969 #e3e3e3 #e3e3e3 #696969'></div></div>
<div class='a' style='left:8px;top:820px;width:1024px;height:1px;background:#a0a0a0;'></div>
<div class='a' style='left:8px;top:821px;width:1024px;height:1px;background:#fff;'></div>
<div class='a' style='left:18px;top:823px;width:100px;height:15px;box-sizing:border-box;border:1px solid;border-color:#a0a0a0 #fff #fff #a0a0a0;'></div>
<div class='a' style='left:20px;top:825px;width:96px;height:11px;background:#3399ff;'></div>
<svg style='left:1016px;top:824px' width='16' height='16'><g stroke='#a0a0a0' stroke-width='1.2'><path d='M15 2 L2 15 M15 6.5 L6.5 15 M15 11 L11 15'/></g><g stroke='#fff' stroke-width='1'><path d='M15 3.2 L3.2 15 M15 7.7 L7.7 15 M15 12.2 L12.2 15'/></g></svg>
</div>
</body></html>
